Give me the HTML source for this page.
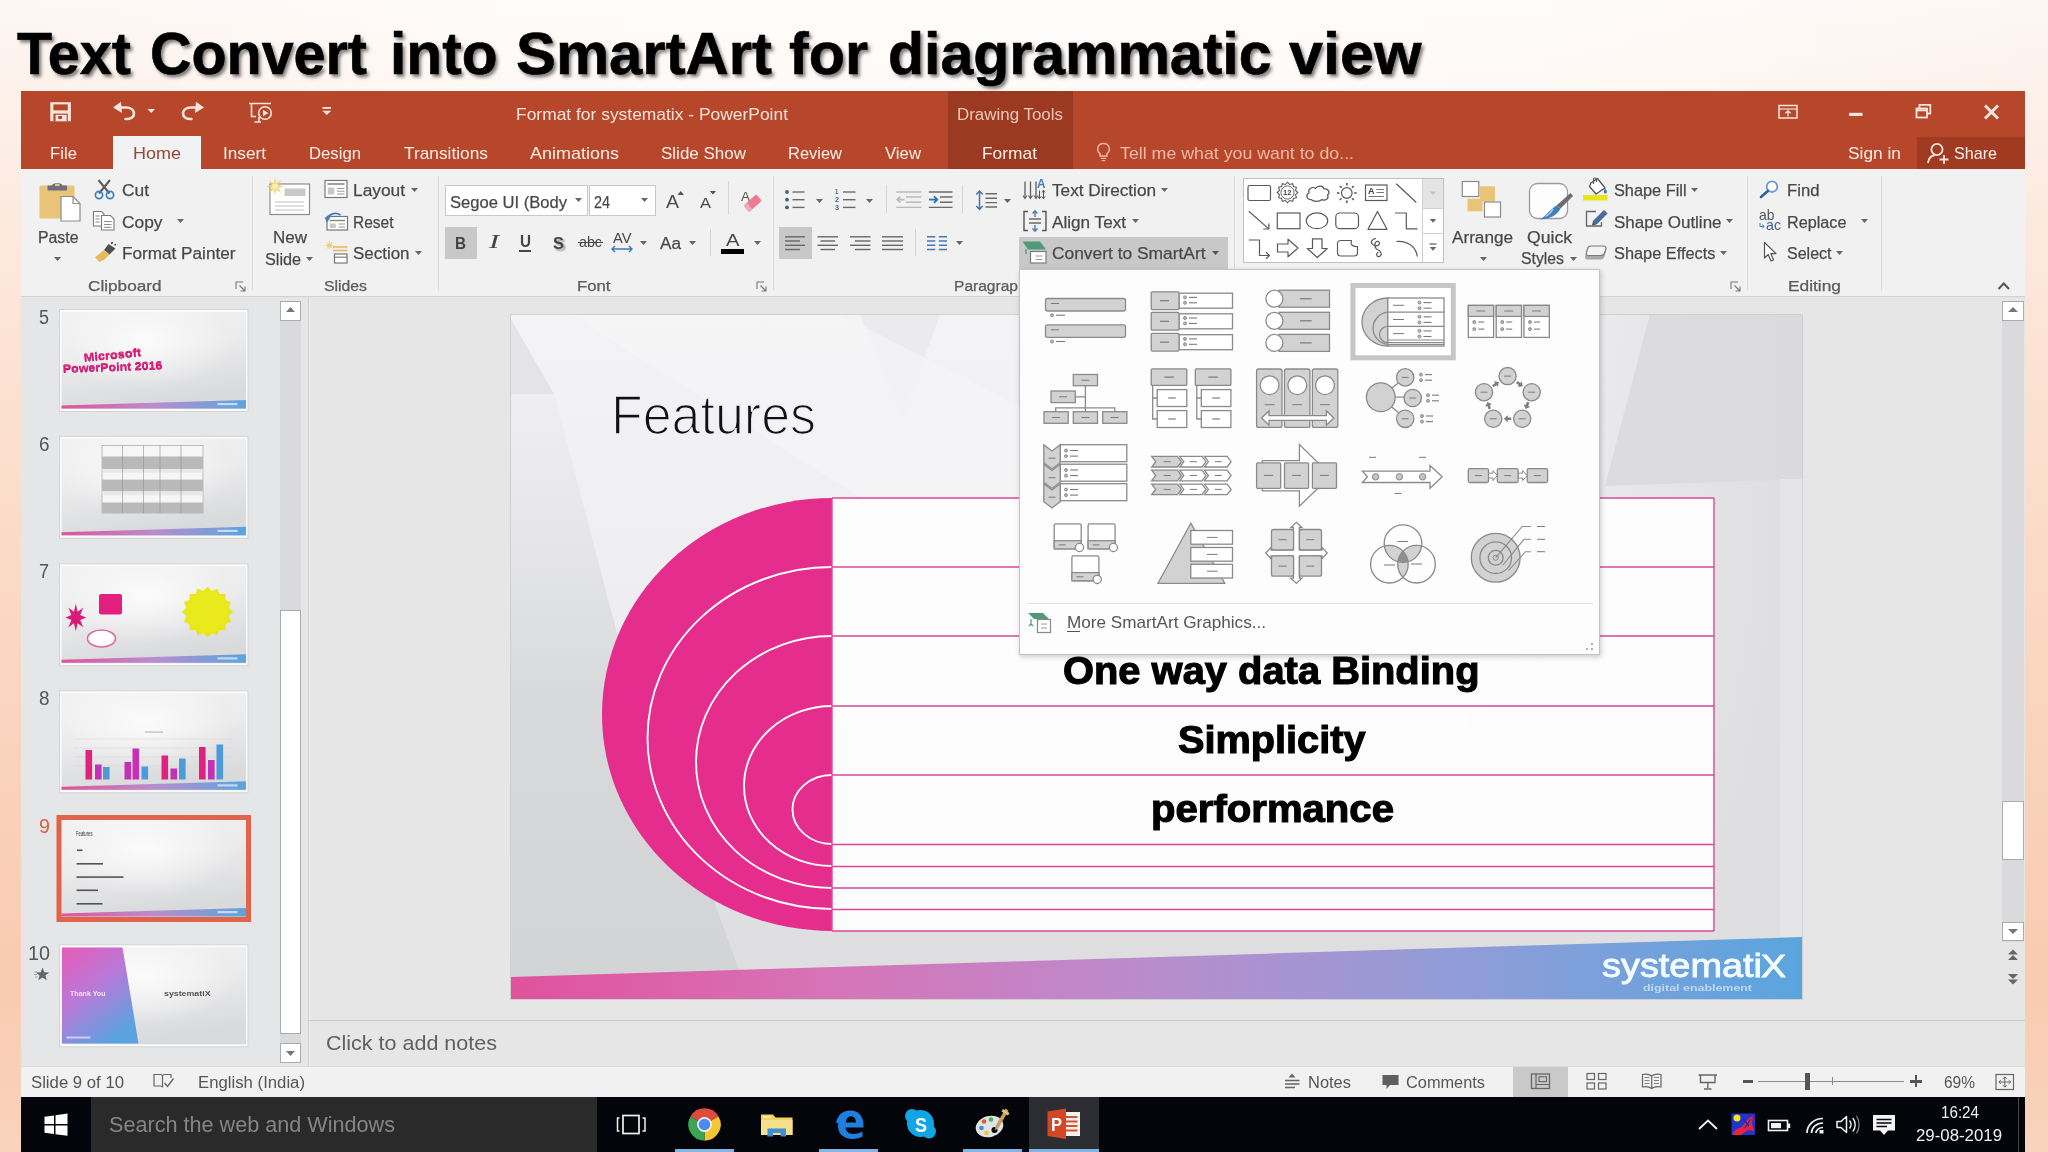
<!DOCTYPE html>
<html><head><meta charset="utf-8"><title>Text Convert into SmartArt</title>
<style>
html,body{margin:0;padding:0;}
body{width:2048px;height:1152px;overflow:hidden;position:relative;font-family:"Liberation Sans",sans-serif;background:#fbe6d9;}
#root{position:absolute;left:0;top:0;width:2048px;height:1152px;overflow:hidden;filter:blur(.5px);}
#root div,#root svg,#root span.t{position:absolute;display:block;}
span.t{white-space:nowrap;transform-origin:0 0;}
svg{overflow:visible;}
</style></head><body><div id="root">
<div style="left:0px;top:0px;width:2048px;height:1152px;background:linear-gradient(180deg,#fdf7f4 0%,#fdf0e9 9%,#fce3d4 30%,#fad7c2 55%,#f9cbb0 85%,#f9d3bc 100%);"></div>
<div style="left:0px;top:0px;width:2048px;height:91px;background:linear-gradient(90deg,rgba(255,255,255,0) 0%,rgba(255,255,255,.55) 25%,rgba(255,255,255,.7) 50%,rgba(255,255,255,.55) 75%,rgba(255,255,255,0) 100%);"></div>
<span class="t" style="left:16.5px;top:25px;font-size:59px;line-height:59px;color:#000;transform:scaleX(0.9749);font-weight:bold;text-shadow:2.5px 2.5px 3.5px rgba(0,0,0,.5);-webkit-text-stroke:.6px #000;">Text</span>
<span class="t" style="left:150px;top:25px;font-size:59px;line-height:59px;color:#000;transform:scaleX(0.9734);font-weight:bold;text-shadow:2.5px 2.5px 3.5px rgba(0,0,0,.5);-webkit-text-stroke:.6px #000;">Convert</span>
<span class="t" style="left:389.5px;top:25px;font-size:59px;line-height:59px;color:#000;transform:scaleX(0.9942);font-weight:bold;text-shadow:2.5px 2.5px 3.5px rgba(0,0,0,.5);-webkit-text-stroke:.6px #000;">into</span>
<span class="t" style="left:515.5px;top:25px;font-size:59px;line-height:59px;color:#000;transform:scaleX(1.0140);font-weight:bold;text-shadow:2.5px 2.5px 3.5px rgba(0,0,0,.5);-webkit-text-stroke:.6px #000;">SmartArt</span>
<span class="t" style="left:789px;top:25px;font-size:59px;line-height:59px;color:#000;transform:scaleX(1.0045);font-weight:bold;text-shadow:2.5px 2.5px 3.5px rgba(0,0,0,.5);-webkit-text-stroke:.6px #000;">for</span>
<span class="t" style="left:888px;top:25px;font-size:59px;line-height:59px;color:#000;transform:scaleX(0.9996);font-weight:bold;text-shadow:2.5px 2.5px 3.5px rgba(0,0,0,.5);-webkit-text-stroke:.6px #000;">diagrammatic</span>
<span class="t" style="left:1289px;top:25px;font-size:59px;line-height:59px;color:#000;transform:scaleX(1.0359);font-weight:bold;text-shadow:2.5px 2.5px 3.5px rgba(0,0,0,.5);-webkit-text-stroke:.6px #000;">view</span>
<div style="left:21px;top:91px;width:2004px;height:78px;background:#b7472a;"></div>
<div style="left:948px;top:91px;width:125px;height:78px;background:#9c3a21;"></div>
<div style="left:1917px;top:136.5px;width:108px;height:32.5px;background:#a03b22;"></div>
<div style="left:113px;top:136px;width:88px;height:34px;background:#f1f2f4;"></div>
<span class="t" style="left:516px;top:106px;font-size:17px;line-height:17px;color:#f6e3dc;transform:scaleX(1.0246);">Format for systematix - PowerPoint</span>
<span class="t" style="left:957px;top:107px;font-size:16px;line-height:16px;color:#eec7bb;transform:scaleX(1.0579);">Drawing Tools</span>
<span class="t" style="left:50px;top:145px;font-size:17px;line-height:17px;color:#fbeee9;transform:scaleX(0.9856);">File</span>
<span class="t" style="left:223px;top:145px;font-size:17px;line-height:17px;color:#fbeee9;transform:scaleX(1.0114);">Insert</span>
<span class="t" style="left:309px;top:145px;font-size:17px;line-height:17px;color:#fbeee9;transform:scaleX(0.9826);">Design</span>
<span class="t" style="left:404px;top:145px;font-size:17px;line-height:17px;color:#fbeee9;transform:scaleX(1.0180);">Transitions</span>
<span class="t" style="left:530px;top:145px;font-size:17px;line-height:17px;color:#fbeee9;transform:scaleX(1.0583);">Animations</span>
<span class="t" style="left:661px;top:145px;font-size:17px;line-height:17px;color:#fbeee9;transform:scaleX(0.9994);">Slide Show</span>
<span class="t" style="left:788px;top:145px;font-size:17px;line-height:17px;color:#fbeee9;transform:scaleX(0.9688);">Review</span>
<span class="t" style="left:885px;top:145px;font-size:17px;line-height:17px;color:#fbeee9;transform:scaleX(0.9852);">View</span>
<span class="t" style="left:982px;top:145px;font-size:17px;line-height:17px;color:#fbeee9;transform:scaleX(1.0215);">Format</span>
<span class="t" style="left:133px;top:145px;font-size:17px;line-height:17px;color:#9c4631;transform:scaleX(1.0585);">Home</span>
<span class="t" style="left:1120px;top:145px;font-size:17px;line-height:17px;color:#f0b9a6;transform:scaleX(1.0449);">Tell me what you want to do...</span>
<span class="t" style="left:1848px;top:145px;font-size:17px;line-height:17px;color:#fbeee9;transform:scaleX(1.0196);">Sign in</span>
<span class="t" style="left:1954px;top:145px;font-size:17px;line-height:17px;color:#fbeee9;transform:scaleX(0.9478);">Share</span>
<div style="left:21px;top:169px;width:2004px;height:127px;background:#f1f1f1;"></div>
<div style="left:21px;top:296px;width:2004px;height:1px;background:#d2d2d2;"></div>
<div style="left:252px;top:176px;width:1px;height:114px;background:#d8d8d8;"></div>
<div style="left:438px;top:176px;width:1px;height:114px;background:#d8d8d8;"></div>
<div style="left:773px;top:176px;width:1px;height:114px;background:#d8d8d8;"></div>
<div style="left:1234px;top:176px;width:1px;height:114px;background:#d8d8d8;"></div>
<div style="left:1747px;top:176px;width:1px;height:114px;background:#d8d8d8;"></div>
<div style="left:1881px;top:176px;width:1px;height:114px;background:#d8d8d8;"></div>
<span class="t" style="left:37.5px;top:230px;font-size:16px;line-height:16px;color:#464646;transform:scaleX(0.9899);-webkit-text-stroke:.25px #555;">Paste</span>
<svg style="left:53.5px;top:257.0px;" width="7" height="4" viewBox="0 0 7 4"><path d="M0 0H7L3.5 4Z" fill="#666"/></svg>
<span class="t" style="left:121.5px;top:183px;font-size:16px;line-height:16px;color:#464646;transform:scaleX(1.0844);-webkit-text-stroke:.25px #555;">Cut</span>
<span class="t" style="left:121.5px;top:215px;font-size:16px;line-height:16px;color:#464646;transform:scaleX(1.0843);-webkit-text-stroke:.25px #555;">Copy</span>
<svg style="left:176.5px;top:219.0px;" width="7" height="4" viewBox="0 0 7 4"><path d="M0 0H7L3.5 4Z" fill="#666"/></svg>
<span class="t" style="left:121.5px;top:246px;font-size:16px;line-height:16px;color:#464646;transform:scaleX(1.0726);-webkit-text-stroke:.25px #555;">Format Painter</span>
<span class="t" style="left:88px;top:278px;font-size:15px;line-height:15px;color:#5e5e5e;transform:scaleX(1.1447);-webkit-text-stroke:.25px #555;">Clipboard</span>
<span class="t" style="left:272.5px;top:230px;font-size:16px;line-height:16px;color:#464646;transform:scaleX(1.0622);-webkit-text-stroke:.25px #555;">New</span>
<span class="t" style="left:265px;top:252px;font-size:16px;line-height:16px;color:#464646;transform:scaleX(1.0118);-webkit-text-stroke:.25px #555;">Slide</span>
<svg style="left:305.5px;top:257.0px;" width="7" height="4" viewBox="0 0 7 4"><path d="M0 0H7L3.5 4Z" fill="#666"/></svg>
<span class="t" style="left:353px;top:183px;font-size:16px;line-height:16px;color:#464646;transform:scaleX(1.0824);-webkit-text-stroke:.25px #555;">Layout</span>
<svg style="left:410.5px;top:188.0px;" width="7" height="4" viewBox="0 0 7 4"><path d="M0 0H7L3.5 4Z" fill="#666"/></svg>
<span class="t" style="left:353px;top:215px;font-size:16px;line-height:16px;color:#464646;transform:scaleX(0.9690);-webkit-text-stroke:.25px #555;">Reset</span>
<span class="t" style="left:353px;top:246px;font-size:16px;line-height:16px;color:#464646;transform:scaleX(1.0587);-webkit-text-stroke:.25px #555;">Section</span>
<svg style="left:414.5px;top:251.0px;" width="7" height="4" viewBox="0 0 7 4"><path d="M0 0H7L3.5 4Z" fill="#666"/></svg>
<span class="t" style="left:323.5px;top:278px;font-size:15px;line-height:15px;color:#5e5e5e;transform:scaleX(1.0525);-webkit-text-stroke:.25px #555;">Slides</span>
<div style="left:445px;top:185px;width:143px;height:31px;background:#fff;border:1px solid #c8c8c8;box-sizing:border-box;"></div>
<div style="left:589px;top:185px;width:67px;height:31px;background:#fff;border:1px solid #c8c8c8;box-sizing:border-box;"></div>
<span class="t" style="left:450px;top:195px;font-size:16px;line-height:16px;color:#464646;transform:scaleX(1.0358);-webkit-text-stroke:.25px #555;">Segoe UI (Body</span>
<svg style="left:574.5px;top:198.0px;" width="7" height="4" viewBox="0 0 7 4"><path d="M0 0H7L3.5 4Z" fill="#666"/></svg>
<span class="t" style="left:594px;top:195px;font-size:16px;line-height:16px;color:#464646;transform:scaleX(0.8990);-webkit-text-stroke:.25px #555;">24</span>
<svg style="left:641.0px;top:198.0px;" width="7" height="4" viewBox="0 0 7 4"><path d="M0 0H7L3.5 4Z" fill="#666"/></svg>
<div style="left:728px;top:181px;width:1px;height:33px;background:#d5d5d5;"></div>
<div style="left:445px;top:227px;width:32px;height:32px;background:#c8c8c8;"></div>
<span class="t" style="left:455px;top:235px;font-size:17px;line-height:17px;color:#444;transform:scaleX(0.8960);font-weight:bold;">B</span>
<span class="t" style="left:489px;top:233px;font-size:18px;line-height:18px;color:#444;transform:scaleX(1.6998);font-style:italic;font-family:'Liberation Serif',serif;">I</span>
<span class="t" style="left:519.5px;top:234px;font-size:16px;line-height:16px;color:#444;transform:scaleX(0.9520);font-weight:bold;">U</span>
<div style="left:519px;top:250px;width:12px;height:1.5px;background:#444;"></div>
<span class="t" style="left:552.5px;top:235px;font-size:17px;line-height:17px;color:#444;transform:scaleX(0.9701);font-weight:bold;text-shadow:2px 2px 2px rgba(0,0,0,.35);">S</span>
<span class="t" style="left:579px;top:234px;font-size:15px;line-height:15px;color:#444;transform:scaleX(0.9510);">abc</span>
<div style="left:578px;top:242px;width:25px;height:1.3px;background:#444;"></div>
<span class="t" style="left:612.5px;top:230px;font-size:15px;line-height:15px;color:#444;transform:scaleX(0.9790);">AV</span>
<svg style="left:611px;top:245px;" width="22" height="8" viewBox="0 0 22 8"><path d="M1 4H21M4 1L1 4L4 7M18 1L21 4L18 7" stroke="#3b78b8" stroke-width="1.4" fill="none"/></svg>
<svg style="left:640.0px;top:241.0px;" width="7" height="4" viewBox="0 0 7 4"><path d="M0 0H7L3.5 4Z" fill="#666"/></svg>
<span class="t" style="left:660px;top:236px;font-size:16px;line-height:16px;color:#464646;transform:scaleX(1.0730);-webkit-text-stroke:.25px #555;">Aa</span>
<svg style="left:688.5px;top:241.0px;" width="7" height="4" viewBox="0 0 7 4"><path d="M0 0H7L3.5 4Z" fill="#666"/></svg>
<div style="left:710px;top:229px;width:1px;height:27px;background:#d5d5d5;"></div>
<span class="t" style="left:726px;top:232px;font-size:17px;line-height:17px;color:#444;transform:scaleX(1.1905);">A</span>
<div style="left:721px;top:248.5px;width:23px;height:5.5px;background:#000;"></div>
<svg style="left:753.5px;top:241.0px;" width="7" height="4" viewBox="0 0 7 4"><path d="M0 0H7L3.5 4Z" fill="#666"/></svg>
<span class="t" style="left:576.5px;top:278px;font-size:15px;line-height:15px;color:#5e5e5e;transform:scaleX(1.1161);-webkit-text-stroke:.25px #555;">Font</span>
<div style="left:886px;top:185px;width:1px;height:28px;background:#d5d5d5;"></div>
<div style="left:962px;top:185px;width:1px;height:28px;background:#d5d5d5;"></div>
<div style="left:915px;top:229px;width:1px;height:27px;background:#d5d5d5;"></div>
<div style="left:779px;top:227px;width:33px;height:32px;background:#c8c8c8;"></div>
<svg style="left:816.0px;top:198.5px;" width="7" height="4" viewBox="0 0 7 4"><path d="M0 0H7L3.5 4Z" fill="#666"/></svg>
<svg style="left:866.0px;top:198.5px;" width="7" height="4" viewBox="0 0 7 4"><path d="M0 0H7L3.5 4Z" fill="#666"/></svg>
<svg style="left:1004.0px;top:198.5px;" width="7" height="4" viewBox="0 0 7 4"><path d="M0 0H7L3.5 4Z" fill="#666"/></svg>
<svg style="left:955.8px;top:241.0px;" width="7" height="4" viewBox="0 0 7 4"><path d="M0 0H7L3.5 4Z" fill="#666"/></svg>
<span class="t" style="left:953.5px;top:278px;font-size:15px;line-height:15px;color:#5e5e5e;transform:scaleX(1.0371);-webkit-text-stroke:.25px #555;">Paragrap</span>
<span class="t" style="left:1052px;top:183px;font-size:16px;line-height:16px;color:#464646;transform:scaleX(1.0730);-webkit-text-stroke:.25px #555;">Text Direction</span>
<svg style="left:1161.0px;top:188.0px;" width="7" height="4" viewBox="0 0 7 4"><path d="M0 0H7L3.5 4Z" fill="#666"/></svg>
<span class="t" style="left:1052px;top:215px;font-size:16px;line-height:16px;color:#464646;transform:scaleX(1.0712);-webkit-text-stroke:.25px #555;">Align Text</span>
<svg style="left:1132.0px;top:219.0px;" width="7" height="4" viewBox="0 0 7 4"><path d="M0 0H7L3.5 4Z" fill="#666"/></svg>
<div style="left:1019px;top:237px;width:209px;height:32px;background:#c8c8c8;"></div>
<span class="t" style="left:1052px;top:246px;font-size:16px;line-height:16px;color:#464646;transform:scaleX(1.0857);-webkit-text-stroke:.25px #555;">Convert to SmartArt</span>
<svg style="left:1211.5px;top:251.0px;" width="7" height="4" viewBox="0 0 7 4"><path d="M0 0H7L3.5 4Z" fill="#555"/></svg>
<div style="left:1243px;top:178px;width:201px;height:85px;background:#fff;border:1px solid #c0c0c0;box-sizing:border-box;"></div>
<div style="left:1423px;top:179px;width:20px;height:29px;background:#e4e4e4;"></div>
<div style="left:1422px;top:179px;width:1px;height:83px;background:#d0d0d0;"></div>
<div style="left:1423px;top:208px;width:20px;height:1px;background:#d0d0d0;"></div>
<div style="left:1423px;top:233px;width:20px;height:1px;background:#d0d0d0;"></div>
<span class="t" style="left:1452px;top:230px;font-size:16px;line-height:16px;color:#464646;transform:scaleX(1.0716);-webkit-text-stroke:.25px #555;">Arrange</span>
<svg style="left:1479.5px;top:257.0px;" width="7" height="4" viewBox="0 0 7 4"><path d="M0 0H7L3.5 4Z" fill="#666"/></svg>
<span class="t" style="left:1527px;top:230px;font-size:16px;line-height:16px;color:#464646;transform:scaleX(1.1003);-webkit-text-stroke:.25px #555;">Quick</span>
<span class="t" style="left:1520.5px;top:251px;font-size:16px;line-height:16px;color:#464646;transform:scaleX(0.9869);-webkit-text-stroke:.25px #555;">Styles</span>
<svg style="left:1569.5px;top:257.0px;" width="7" height="4" viewBox="0 0 7 4"><path d="M0 0H7L3.5 4Z" fill="#666"/></svg>
<span class="t" style="left:1613.5px;top:183px;font-size:16px;line-height:16px;color:#464646;transform:scaleX(1.0190);-webkit-text-stroke:.25px #555;">Shape Fill</span>
<svg style="left:1690.5px;top:188.0px;" width="7" height="4" viewBox="0 0 7 4"><path d="M0 0H7L3.5 4Z" fill="#666"/></svg>
<span class="t" style="left:1613.5px;top:215px;font-size:16px;line-height:16px;color:#464646;transform:scaleX(1.0601);-webkit-text-stroke:.25px #555;">Shape Outline</span>
<svg style="left:1726.0px;top:219.0px;" width="7" height="4" viewBox="0 0 7 4"><path d="M0 0H7L3.5 4Z" fill="#666"/></svg>
<span class="t" style="left:1613.5px;top:246px;font-size:16px;line-height:16px;color:#464646;transform:scaleX(1.0218);-webkit-text-stroke:.25px #555;">Shape Effects</span>
<svg style="left:1720.0px;top:251.0px;" width="7" height="4" viewBox="0 0 7 4"><path d="M0 0H7L3.5 4Z" fill="#666"/></svg>
<span class="t" style="left:1786.5px;top:183px;font-size:16px;line-height:16px;color:#464646;transform:scaleX(1.0441);-webkit-text-stroke:.25px #555;">Find</span>
<span class="t" style="left:1786.5px;top:215px;font-size:16px;line-height:16px;color:#464646;transform:scaleX(1.0135);-webkit-text-stroke:.25px #555;">Replace</span>
<svg style="left:1861.0px;top:219.0px;" width="7" height="4" viewBox="0 0 7 4"><path d="M0 0H7L3.5 4Z" fill="#666"/></svg>
<span class="t" style="left:1786.5px;top:246px;font-size:16px;line-height:16px;color:#464646;transform:scaleX(1.0007);-webkit-text-stroke:.25px #555;">Select</span>
<svg style="left:1836.0px;top:251.0px;" width="7" height="4" viewBox="0 0 7 4"><path d="M0 0H7L3.5 4Z" fill="#666"/></svg>
<span class="t" style="left:1788px;top:278px;font-size:15px;line-height:15px;color:#5e5e5e;transform:scaleX(1.1555);-webkit-text-stroke:.25px #555;">Editing</span>
<div style="left:21px;top:297px;width:2004px;height:769px;background:#e6e6e6;"></div>
<div style="left:21px;top:297px;width:287px;height:769px;background:#e5e6e7;"></div>
<div style="left:307.5px;top:297px;width:1px;height:769px;background:#cfcfcf;"></div>
<div style="left:308.5px;top:297px;width:1px;height:769px;background:#f0f0f0;"></div>
<div style="left:280px;top:301px;width:21px;height:761px;background:#dadadc;"></div>
<div style="left:280px;top:301px;width:21px;height:20px;background:#fff;border:1px solid #ababab;box-sizing:border-box;"></div>
<svg style="left:286px;top:307px;" width="9" height="5" viewBox="0 0 9 5"><path d="M0 5H9L4.5 0Z" fill="#777"/></svg>
<div style="left:280px;top:1043px;width:21px;height:20px;background:#fff;border:1px solid #ababab;box-sizing:border-box;"></div>
<svg style="left:286px;top:1051px;" width="9" height="5" viewBox="0 0 9 5"><path d="M0 0H9L4.5 5Z" fill="#777"/></svg>
<div style="left:280px;top:610px;width:21px;height:424px;background:#fff;border:1px solid #ababab;box-sizing:border-box;"></div>
<div style="left:2002px;top:301px;width:22px;height:641px;background:#dadadc;"></div>
<div style="left:2002px;top:301px;width:22px;height:20px;background:#fff;border:1px solid #ababab;box-sizing:border-box;"></div>
<svg style="left:2008px;top:307px;" width="10" height="5" viewBox="0 0 10 5"><path d="M0 5H10L5 0Z" fill="#777"/></svg>
<div style="left:2002px;top:922px;width:22px;height:19px;background:#fff;border:1px solid #ababab;box-sizing:border-box;"></div>
<svg style="left:2008px;top:929px;" width="10" height="5" viewBox="0 0 10 5"><path d="M0 0H10L5 5Z" fill="#777"/></svg>
<div style="left:2002px;top:801px;width:22px;height:59px;background:#fff;border:1px solid #ababab;box-sizing:border-box;"></div>
<svg style="left:2007px;top:949px;" width="12" height="12" viewBox="0 0 12 12"><path d="M1 5.5H11L6 0.5ZM1 11H11L6 6Z" fill="#666"/></svg>
<svg style="left:2007px;top:973px;" width="12" height="12" viewBox="0 0 12 12"><path d="M1 1H11L6 6ZM1 6.5H11L6 11.5Z" fill="#666"/></svg>
<div style="left:309px;top:1020px;width:1716px;height:1px;background:#c9c9c9;"></div>
<span class="t" style="left:325.5px;top:1032px;font-size:21px;line-height:21px;color:#606060;transform:scaleX(1.0244);">Click to add notes</span>
<div style="left:21px;top:1066px;width:2004px;height:31px;background:#f1f1f1;"></div>
<div style="left:21px;top:1066px;width:2004px;height:1px;background:#dcdcdc;"></div>
<span class="t" style="left:31px;top:1075px;font-size:16px;line-height:16px;color:#555;transform:scaleX(1.0455);">Slide 9 of 10</span>
<span class="t" style="left:198px;top:1075px;font-size:16px;line-height:16px;color:#555;transform:scaleX(1.0462);">English (India)</span>
<span class="t" style="left:1308px;top:1075px;font-size:16px;line-height:16px;color:#555;transform:scaleX(1.0288);">Notes</span>
<span class="t" style="left:1406px;top:1075px;font-size:16px;line-height:16px;color:#555;transform:scaleX(1.0213);">Comments</span>
<div style="left:1513px;top:1067px;width:55px;height:30px;background:#c9c9c9;"></div>
<span class="t" style="left:1944px;top:1075px;font-size:16px;line-height:16px;color:#555;transform:scaleX(0.9680);">69%</span>
<div style="left:1758px;top:1081px;width:146px;height:1px;background:#8a8a8a;"></div>
<div style="left:1805px;top:1073px;width:5px;height:17px;background:#555;"></div>
<div style="left:1832px;top:1077px;width:1px;height:8px;background:#8a8a8a;"></div>
<div style="left:1743px;top:1080px;width:10px;height:2.5px;background:#555;"></div>
<div style="left:1910px;top:1080px;width:12px;height:2.5px;background:#555;"></div>
<div style="left:1914.8px;top:1075px;width:2.5px;height:12px;background:#555;"></div>
<div style="left:21px;top:1097px;width:2004px;height:55px;background:#04050a;"></div>
<div style="left:91px;top:1097px;width:506px;height:55px;background:#2a2a2b;"></div>
<span class="t" style="left:109px;top:1114px;font-size:22px;line-height:22px;color:#858585;transform:scaleX(0.9826);">Search the web and Windows</span>
<div style="left:1029px;top:1097px;width:70px;height:55px;background:#2b2d31;"></div>
<div style="left:675px;top:1149px;width:59px;height:3px;background:#82b4e6;"></div>
<div style="left:819px;top:1149px;width:59px;height:3px;background:#82b4e6;"></div>
<div style="left:963px;top:1149px;width:59px;height:3px;background:#82b4e6;"></div>
<div style="left:1029px;top:1149px;width:70px;height:3px;background:#82b4e6;"></div>
<span class="t" style="left:1941px;top:1104px;font-size:17px;line-height:17px;color:#f0f0f0;transform:scaleX(0.8932);">16:24</span>
<span class="t" style="left:1916px;top:1127px;font-size:17px;line-height:17px;color:#f0f0f0;transform:scaleX(0.9889);">29-08-2019</span>
<div style="left:2018px;top:1097px;width:1px;height:55px;background:#444;"></div>
<svg style="left:510px;top:313.5px;" width="1293" height="686" viewBox="0 0 1293 686">
<defs>
<linearGradient id="sbg" x1="0" y1="0" x2="0" y2="1"><stop offset="0" stop-color="#f3f3f5"/><stop offset="0.45" stop-color="#eeeef0"/><stop offset="0.8" stop-color="#e2e2e5"/><stop offset="1" stop-color="#dcdcdf"/></linearGradient><linearGradient id="ll" x1="0" y1="0" x2="0" y2="1"><stop offset="0" stop-color="#e6e6e8" stop-opacity=".3"/><stop offset="0.5" stop-color="#d8d9db"/><stop offset="1" stop-color="#d2d3d5"/></linearGradient>
<linearGradient id="band" x1="0" y1="0" x2="1" y2="0"><stop offset="0" stop-color="#e0529c"/><stop offset="0.25" stop-color="#d674b8"/><stop offset="0.5" stop-color="#b98dcd"/><stop offset="0.75" stop-color="#8d9dd8"/><stop offset="1" stop-color="#5aa5de"/></linearGradient>
<linearGradient id="ray" x1="0" y1="0" x2="0" y2="1"><stop offset="0" stop-color="#fff" stop-opacity=".95"/><stop offset="1" stop-color="#fff" stop-opacity="0.3"/></linearGradient>
<linearGradient id="rt" x1="0" y1="0" x2="1" y2="0"><stop offset="0" stop-color="#e2e2e5" stop-opacity="0"/><stop offset="1" stop-color="#dedee1" stop-opacity="1"/></linearGradient>
</defs>
<rect x="0" y="0" width="1293" height="686" fill="url(#sbg)"/>
<polygon points="0,0 1,5 44,80 0,80" fill="#e4e4e6"/>
<polygon points="0,80 44,80 110,330 240,686 0,686" fill="url(#ll)"/>
<polygon points="350,0 430,0 392,107" fill="#e9e9eb" opacity=".8"/>
<polygon points="60,0 330,0 700,190 400,215" fill="#f5f5f7" opacity=".7"/>
<polygon points="900,0 1293,0 1293,686 1000,686" fill="url(#rt)"/>
<polygon points="1140,0 1293,0 1293,165 1095,172" fill="#d9d9dc" opacity=".85"/>
<polygon points="1270,165 1293,165 1293,686 1270,686" fill="#e9e9eb" opacity=".6"/>
<polygon points="1,663 1293,623 1293,686 1,686" fill="url(#band)"/>
<rect x="0.5" y="0.5" width="1292" height="685" fill="none" stroke="#cfcfd1"/>
</svg>
<span class="t" style="left:611px;top:388px;font-size:55px;line-height:55px;color:#111;transform:scaleX(0.9445);-webkit-text-stroke:1.7px #f1f1f3;">Features</span>
<svg style="left:0px;top:0px;" width="2048" height="1152" viewBox="0 0 2048 1152"><path d="M832 498A230 216.5 0 0 0 832 931Z" fill="#e52d8d"/><path d="M832 567A184.5 171.0 0 0 0 832 909" fill="none" stroke="#fff" stroke-width="1.9"/><path d="M832 636A136 126.0 0 0 0 832 888" fill="none" stroke="#fff" stroke-width="1.9"/><path d="M832 706A88 80.0 0 0 0 832 866" fill="none" stroke="#fff" stroke-width="1.9"/><path d="M832 775A39.5 34.5 0 0 0 832 844" fill="none" stroke="#fff" stroke-width="1.9"/><rect x="832" y="498" width="882" height="433" fill="#fdfdfd" fill-opacity=".96"/><path d="M832 498H1714" stroke="#d74a96" stroke-width="1.4"/><path d="M832 567H1714" stroke="#d74a96" stroke-width="1.4"/><path d="M832 636H1714" stroke="#d74a96" stroke-width="1.4"/><path d="M832 706H1714" stroke="#d74a96" stroke-width="1.4"/><path d="M832 775H1714" stroke="#d74a96" stroke-width="1.4"/><path d="M832 844.5H1714" stroke="#d74a96" stroke-width="1.4"/><path d="M832 866.5H1714" stroke="#d74a96" stroke-width="1.4"/><path d="M832 888H1714" stroke="#d74a96" stroke-width="1.4"/><path d="M832 909.5H1714" stroke="#d74a96" stroke-width="1.4"/><path d="M832 931H1714" stroke="#d74a96" stroke-width="1.4"/><path d="M832 498V931M1714 498V931" stroke="#d74a96" stroke-width="1.4"/></svg>
<span class="t" style="left:1063px;top:652px;font-size:38px;line-height:38px;color:#000;transform:scaleX(1.0493);font-weight:bold;-webkit-text-stroke:1.1px #000;">One way data Binding</span>
<span class="t" style="left:1178px;top:721px;font-size:38px;line-height:38px;color:#000;transform:scaleX(1.0446);font-weight:bold;-webkit-text-stroke:1.1px #000;">Simplicity</span>
<span class="t" style="left:1151px;top:790px;font-size:38px;line-height:38px;color:#000;transform:scaleX(1.0556);font-weight:bold;-webkit-text-stroke:1.1px #000;">performance</span>
<span class="t" style="left:1602px;top:948px;font-size:34px;line-height:34px;color:#f4fbff;transform:scaleX(1.1143);-webkit-text-stroke:.9px #f4fbff;">systemati</span>
<span class="t" style="left:1761px;top:950px;font-size:32px;line-height:32px;color:#f4fbff;transform:scaleX(1.1712);-webkit-text-stroke:.9px #f4fbff;">X</span>
<span class="t" style="left:1643px;top:984px;font-size:9px;line-height:9px;color:#bcdaf3;transform:scaleX(1.3795);font-weight:bold;">digital enablement</span>
<div style="left:1019px;top:269px;width:581px;height:386px;background:#fdfdfd;border:1px solid #c4c4c4;box-sizing:border-box;box-shadow:1px 2px 5px rgba(0,0,0,.2);"></div>
<div style="left:1027px;top:603px;width:566px;height:1px;background:#e3e3e3;"></div>
<svg style="left:0px;top:0px;" width="2048" height="1152" viewBox="0 0 2048 1152"><rect x="1045.5" y="298.5" width="80.0" height="12.5" rx="2" fill="#d2d2d2" stroke="#8a8a8a" stroke-width="1.3"/><path d="M1051.0 303.5H1059.0" stroke="#7a7a7a" stroke-width="1"/><circle cx="1052.0" cy="315.2" r="1.5" fill="#bbb" stroke="#7a7a7a" stroke-width="0.8"/><path d="M1056.0 315.2H1065.0" stroke="#7a7a7a" stroke-width="1.1"/><rect x="1045.5" y="324.8" width="80.0" height="12.5" rx="2" fill="#d2d2d2" stroke="#8a8a8a" stroke-width="1.3"/><path d="M1051.0 329.8H1059.0" stroke="#7a7a7a" stroke-width="1"/><circle cx="1052.0" cy="341.5" r="1.5" fill="#bbb" stroke="#7a7a7a" stroke-width="0.8"/><path d="M1056.0 341.5H1065.0" stroke="#7a7a7a" stroke-width="1.1"/><rect x="1179.0" y="293.2" width="53.5" height="15.0" rx="0" fill="#fff" stroke="#8a8a8a" stroke-width="1.3"/><rect x="1151.2" y="291.8" width="27.8" height="17.8" rx="1" fill="#d2d2d2" stroke="#8a8a8a" stroke-width="1.3"/><path d="M1160.0 300.7H1169.0" stroke="#7a7a7a" stroke-width="1.2"/><circle cx="1185.0" cy="297.4" r="1.5" fill="#bbb" stroke="#7a7a7a" stroke-width="0.8"/><path d="M1189.0 297.4H1197.0" stroke="#7a7a7a" stroke-width="1.1"/><circle cx="1185.0" cy="302.8" r="1.5" fill="#bbb" stroke="#7a7a7a" stroke-width="0.8"/><path d="M1189.0 302.8H1197.0" stroke="#7a7a7a" stroke-width="1.1"/><rect x="1179.0" y="313.8" width="53.5" height="15.0" rx="0" fill="#fff" stroke="#8a8a8a" stroke-width="1.3"/><rect x="1151.2" y="312.4" width="27.8" height="17.8" rx="1" fill="#d2d2d2" stroke="#8a8a8a" stroke-width="1.3"/><path d="M1160.0 321.3H1169.0" stroke="#7a7a7a" stroke-width="1.2"/><circle cx="1185.0" cy="318.0" r="1.5" fill="#bbb" stroke="#7a7a7a" stroke-width="0.8"/><path d="M1189.0 318.0H1197.0" stroke="#7a7a7a" stroke-width="1.1"/><circle cx="1185.0" cy="323.4" r="1.5" fill="#bbb" stroke="#7a7a7a" stroke-width="0.8"/><path d="M1189.0 323.4H1197.0" stroke="#7a7a7a" stroke-width="1.1"/><rect x="1179.0" y="334.7" width="53.5" height="15.0" rx="0" fill="#fff" stroke="#8a8a8a" stroke-width="1.3"/><rect x="1151.2" y="333.3" width="27.8" height="17.8" rx="1" fill="#d2d2d2" stroke="#8a8a8a" stroke-width="1.3"/><path d="M1160.0 342.2H1169.0" stroke="#7a7a7a" stroke-width="1.2"/><circle cx="1185.0" cy="338.9" r="1.5" fill="#bbb" stroke="#7a7a7a" stroke-width="0.8"/><path d="M1189.0 338.9H1197.0" stroke="#7a7a7a" stroke-width="1.1"/><circle cx="1185.0" cy="344.3" r="1.5" fill="#bbb" stroke="#7a7a7a" stroke-width="0.8"/><path d="M1189.0 344.3H1197.0" stroke="#7a7a7a" stroke-width="1.1"/><rect x="1279.0" y="290.2" width="50.5" height="17.0" rx="0" fill="#d2d2d2" stroke="#8a8a8a" stroke-width="1.3"/><circle cx="1274.4" cy="298.7" r="8.5" fill="#fff" stroke="#8a8a8a" stroke-width="1.3"/><path d="M1300.0 298.7H1311.7" stroke="#7a7a7a" stroke-width="1.2"/><rect x="1279.0" y="312.3" width="50.5" height="17.0" rx="0" fill="#d2d2d2" stroke="#8a8a8a" stroke-width="1.3"/><circle cx="1274.4" cy="320.8" r="8.5" fill="#fff" stroke="#8a8a8a" stroke-width="1.3"/><path d="M1300.0 320.8H1311.7" stroke="#7a7a7a" stroke-width="1.2"/><rect x="1279.0" y="334.4" width="50.5" height="17.0" rx="0" fill="#d2d2d2" stroke="#8a8a8a" stroke-width="1.3"/><circle cx="1274.4" cy="342.9" r="8.5" fill="#fff" stroke="#8a8a8a" stroke-width="1.3"/><path d="M1300.0 342.9H1311.7" stroke="#7a7a7a" stroke-width="1.2"/><rect x="1352.9" y="285.5" width="100.4" height="72.3" fill="#fff" stroke="#c6c6c6" stroke-width="5"/><path d="M1387.8 298A25.8 24 0 0 0 1387.8 346Z" fill="#d2d2d2" stroke="#8a8a8a" stroke-width="1.3" /><path d="M1387.8 312.2A16.6 16.2 0 0 0 1387.8 344.4" fill="none" stroke="#8a8a8a" stroke-width="1.3" /><path d="M1387.8 326.3A8.3 8.2 0 0 0 1387.8 342.7" fill="none" stroke="#8a8a8a" stroke-width="1.3" /><rect x="1387.8" y="298.0" width="56.2" height="48.0" rx="0" fill="#fff" stroke="#8a8a8a" stroke-width="1.3"/><path d="M1387.8 312.2H1444.0" stroke="#8a8a8a" stroke-width="1.2"/><path d="M1387.8 326.3H1444.0" stroke="#8a8a8a" stroke-width="1.2"/><path d="M1387.8 340.0H1444.0" stroke="#8a8a8a" stroke-width="1.2"/><path d="M1387.8 342.5H1444.0" stroke="#8a8a8a" stroke-width="1.2"/><path d="M1387.8 344.3H1444.0" stroke="#8a8a8a" stroke-width="1.2"/><path d="M1393.0 305.3H1404.0" stroke="#7a7a7a" stroke-width="1"/><circle cx="1419.5" cy="302.6" r="1.5" fill="#bbb" stroke="#7a7a7a" stroke-width="0.8"/><path d="M1423.5 302.6H1431.5" stroke="#7a7a7a" stroke-width="1.1"/><circle cx="1419.5" cy="308.2" r="1.5" fill="#bbb" stroke="#7a7a7a" stroke-width="0.8"/><path d="M1423.5 308.2H1431.5" stroke="#7a7a7a" stroke-width="1.1"/><path d="M1393.0 319.5H1404.0" stroke="#7a7a7a" stroke-width="1"/><circle cx="1419.5" cy="316.8" r="1.5" fill="#bbb" stroke="#7a7a7a" stroke-width="0.8"/><path d="M1423.5 316.8H1431.5" stroke="#7a7a7a" stroke-width="1.1"/><circle cx="1419.5" cy="322.4" r="1.5" fill="#bbb" stroke="#7a7a7a" stroke-width="0.8"/><path d="M1423.5 322.4H1431.5" stroke="#7a7a7a" stroke-width="1.1"/><path d="M1393.0 333.6H1404.0" stroke="#7a7a7a" stroke-width="1"/><circle cx="1419.5" cy="330.9" r="1.5" fill="#bbb" stroke="#7a7a7a" stroke-width="0.8"/><path d="M1423.5 330.9H1431.5" stroke="#7a7a7a" stroke-width="1.1"/><circle cx="1419.5" cy="336.5" r="1.5" fill="#bbb" stroke="#7a7a7a" stroke-width="0.8"/><path d="M1423.5 336.5H1431.5" stroke="#7a7a7a" stroke-width="1.1"/><rect x="1468.3" y="305.4" width="25.3" height="32.0" rx="0" fill="#fff" stroke="#8a8a8a" stroke-width="1.3"/><rect x="1468.3" y="305.4" width="25.3" height="11.0" rx="0" fill="#d2d2d2" stroke="#8a8a8a" stroke-width="1.3"/><path d="M1476.3 311.0H1485.3" stroke="#7a7a7a" stroke-width="1"/><circle cx="1474.3" cy="322.0" r="1.5" fill="#bbb" stroke="#7a7a7a" stroke-width="0.8"/><path d="M1478.3 322.0H1484.3" stroke="#7a7a7a" stroke-width="1.1"/><circle cx="1474.3" cy="329.1" r="1.5" fill="#bbb" stroke="#7a7a7a" stroke-width="0.8"/><path d="M1478.3 329.1H1484.3" stroke="#7a7a7a" stroke-width="1.1"/><rect x="1496.2" y="305.4" width="25.3" height="32.0" rx="0" fill="#fff" stroke="#8a8a8a" stroke-width="1.3"/><rect x="1496.2" y="305.4" width="25.3" height="11.0" rx="0" fill="#d2d2d2" stroke="#8a8a8a" stroke-width="1.3"/><path d="M1504.2 311.0H1513.2" stroke="#7a7a7a" stroke-width="1"/><circle cx="1502.2" cy="322.0" r="1.5" fill="#bbb" stroke="#7a7a7a" stroke-width="0.8"/><path d="M1506.2 322.0H1512.2" stroke="#7a7a7a" stroke-width="1.1"/><circle cx="1502.2" cy="329.1" r="1.5" fill="#bbb" stroke="#7a7a7a" stroke-width="0.8"/><path d="M1506.2 329.1H1512.2" stroke="#7a7a7a" stroke-width="1.1"/><rect x="1524.0" y="305.4" width="25.3" height="32.0" rx="0" fill="#fff" stroke="#8a8a8a" stroke-width="1.3"/><rect x="1524.0" y="305.4" width="25.3" height="11.0" rx="0" fill="#d2d2d2" stroke="#8a8a8a" stroke-width="1.3"/><path d="M1532.0 311.0H1541.0" stroke="#7a7a7a" stroke-width="1"/><circle cx="1530.0" cy="322.0" r="1.5" fill="#bbb" stroke="#7a7a7a" stroke-width="0.8"/><path d="M1534.0 322.0H1540.0" stroke="#7a7a7a" stroke-width="1.1"/><circle cx="1530.0" cy="329.1" r="1.5" fill="#bbb" stroke="#7a7a7a" stroke-width="0.8"/><path d="M1534.0 329.1H1540.0" stroke="#7a7a7a" stroke-width="1.1"/><path d="M1085.4 385.7V411.7M1075.3 396.8H1085.4M1055.7 411.7V407.8H1114.8V411.7" fill="none" stroke="#8a8a8a" stroke-width="1.3" /><rect x="1073.3" y="374.5" width="24.2" height="11.2" rx="0" fill="#d2d2d2" stroke="#8a8a8a" stroke-width="1.3"/><path d="M1081.5 380.2H1089.5" stroke="#7a7a7a" stroke-width="1"/><rect x="1051.0" y="391.0" width="24.3" height="11.6" rx="0" fill="#d2d2d2" stroke="#8a8a8a" stroke-width="1.3"/><path d="M1059.0 396.8H1067.0" stroke="#7a7a7a" stroke-width="1"/><rect x="1044.0" y="411.7" width="24.2" height="11.6" rx="0" fill="#d2d2d2" stroke="#8a8a8a" stroke-width="1.3"/><path d="M1052.0 417.5H1060.0" stroke="#7a7a7a" stroke-width="1"/><rect x="1073.3" y="411.7" width="24.2" height="11.6" rx="0" fill="#d2d2d2" stroke="#8a8a8a" stroke-width="1.3"/><path d="M1081.3 417.5H1089.3" stroke="#7a7a7a" stroke-width="1"/><rect x="1102.7" y="411.7" width="24.2" height="11.6" rx="0" fill="#d2d2d2" stroke="#8a8a8a" stroke-width="1.3"/><path d="M1110.7 417.5H1118.7" stroke="#7a7a7a" stroke-width="1"/><path d="M1152.7 385.4V419H1157.2M1152.7 398H1157.2" fill="none" stroke="#8a8a8a" stroke-width="1.3" /><rect x="1151.2" y="368.8" width="35.6" height="16.6" rx="1" fill="#d2d2d2" stroke="#8a8a8a" stroke-width="1.3"/><path d="M1164.2 377.1H1173.7" stroke="#7a7a7a" stroke-width="1.2"/><rect x="1157.2" y="389.6" width="29.6" height="16.9" rx="0" fill="#fff" stroke="#8a8a8a" stroke-width="1.3"/><path d="M1168.2 398.0H1175.7" stroke="#7a7a7a" stroke-width="1.2"/><rect x="1157.2" y="410.6" width="29.6" height="16.9" rx="0" fill="#fff" stroke="#8a8a8a" stroke-width="1.3"/><path d="M1168.2 419.0H1175.7" stroke="#7a7a7a" stroke-width="1.2"/><path d="M1196.8 385.4V419H1201.3M1196.8 398H1201.3" fill="none" stroke="#8a8a8a" stroke-width="1.3" /><rect x="1195.3" y="368.8" width="35.6" height="16.6" rx="1" fill="#d2d2d2" stroke="#8a8a8a" stroke-width="1.3"/><path d="M1208.3 377.1H1217.8" stroke="#7a7a7a" stroke-width="1.2"/><rect x="1201.3" y="389.6" width="29.6" height="16.9" rx="0" fill="#fff" stroke="#8a8a8a" stroke-width="1.3"/><path d="M1212.3 398.0H1219.8" stroke="#7a7a7a" stroke-width="1.2"/><rect x="1201.3" y="410.6" width="29.6" height="16.9" rx="0" fill="#fff" stroke="#8a8a8a" stroke-width="1.3"/><path d="M1212.3 419.0H1219.8" stroke="#7a7a7a" stroke-width="1.2"/><rect x="1256.6" y="369.0" width="25.4" height="58.4" rx="2" fill="#d2d2d2" stroke="#8a8a8a" stroke-width="1.3"/><circle cx="1269.6" cy="385.2" r="9.4" fill="#fff" stroke="#8a8a8a" stroke-width="1.3"/><path d="M1264.6 404.7H1274.6" stroke="#7a7a7a" stroke-width="1"/><rect x="1284.5" y="369.0" width="25.4" height="58.4" rx="2" fill="#d2d2d2" stroke="#8a8a8a" stroke-width="1.3"/><circle cx="1297.3" cy="385.2" r="9.4" fill="#fff" stroke="#8a8a8a" stroke-width="1.3"/><path d="M1292.3 404.7H1302.3" stroke="#7a7a7a" stroke-width="1"/><rect x="1312.4" y="369.0" width="25.4" height="58.4" rx="2" fill="#d2d2d2" stroke="#8a8a8a" stroke-width="1.3"/><circle cx="1325.0" cy="385.2" r="9.4" fill="#fff" stroke="#8a8a8a" stroke-width="1.3"/><path d="M1320.0 404.7H1330.0" stroke="#7a7a7a" stroke-width="1"/><path d="M1261.6 418L1269 410.8V415.6H1326.4V410.8L1333.8 418L1326.4 425.2V420.4H1269V425.2Z" fill="#fff" stroke="#8a8a8a" stroke-width="1.3" /><path d="M1380.8 397.2L1405.2 377.3M1380.8 397.2H1412.7M1380.8 397.2L1405.2 418.8" fill="none" stroke="#8a8a8a" stroke-width="1.3" /><circle cx="1380.8" cy="397.2" r="14.4" fill="#d2d2d2" stroke="#8a8a8a" stroke-width="1.3"/><circle cx="1405.2" cy="377.4" r="8.7" fill="#d2d2d2" stroke="#8a8a8a" stroke-width="1.3"/><path d="M1401.7 377.4H1408.7" stroke="#7a7a7a" stroke-width="1"/><circle cx="1421.0" cy="374.6" r="1.5" fill="#bbb" stroke="#7a7a7a" stroke-width="0.8"/><path d="M1425.0 374.6H1432.0" stroke="#7a7a7a" stroke-width="1.1"/><circle cx="1421.0" cy="380.2" r="1.5" fill="#bbb" stroke="#7a7a7a" stroke-width="0.8"/><path d="M1425.0 380.2H1432.0" stroke="#7a7a7a" stroke-width="1.1"/><circle cx="1412.7" cy="398.0" r="8.7" fill="#d2d2d2" stroke="#8a8a8a" stroke-width="1.3"/><path d="M1409.2 398.0H1416.2" stroke="#7a7a7a" stroke-width="1"/><circle cx="1428.0" cy="395.2" r="1.5" fill="#bbb" stroke="#7a7a7a" stroke-width="0.8"/><path d="M1432.0 395.2H1439.0" stroke="#7a7a7a" stroke-width="1.1"/><circle cx="1428.0" cy="400.8" r="1.5" fill="#bbb" stroke="#7a7a7a" stroke-width="0.8"/><path d="M1432.0 400.8H1439.0" stroke="#7a7a7a" stroke-width="1.1"/><circle cx="1405.2" cy="418.8" r="8.7" fill="#d2d2d2" stroke="#8a8a8a" stroke-width="1.3"/><path d="M1401.7 418.8H1408.7" stroke="#7a7a7a" stroke-width="1"/><circle cx="1422.0" cy="416.0" r="1.5" fill="#bbb" stroke="#7a7a7a" stroke-width="0.8"/><path d="M1426.0 416.0H1433.0" stroke="#7a7a7a" stroke-width="1.1"/><circle cx="1422.0" cy="421.6" r="1.5" fill="#bbb" stroke="#7a7a7a" stroke-width="0.8"/><path d="M1426.0 421.6H1433.0" stroke="#7a7a7a" stroke-width="1.1"/><polygon points="1517.5,381.1 1520.4,383.1 1521.6,381.2 1522.8,386.3 1517.7,387.1 1518.9,385.2 1516.0,383.3" fill="#7d7d7d"/><polygon points="1529.4,402.6 1528.2,405.9 1530.3,406.7 1525.7,409.1 1523.6,404.3 1525.7,405.1 1526.9,401.8" fill="#7d7d7d"/><polygon points="1511.2,420.1 1507.7,420.1 1507.7,422.4 1503.9,418.8 1507.7,415.2 1507.7,417.5 1511.2,417.5" fill="#7d7d7d"/><polygon points="1488.5,409.2 1487.4,405.9 1485.2,406.7 1487.4,401.9 1492.0,404.3 1489.8,405.1 1491.0,408.4" fill="#7d7d7d"/><polygon points="1492.2,385.0 1495.1,383.1 1493.8,381.2 1498.9,382.0 1497.8,387.1 1496.5,385.2 1493.6,387.2" fill="#7d7d7d"/><circle cx="1507.6" cy="376.1" r="8.6" fill="#d2d2d2" stroke="#8a8a8a" stroke-width="1.3"/><path d="M1504.1 376.1H1511.1" stroke="#7a7a7a" stroke-width="1"/><circle cx="1531.7" cy="392.2" r="8.6" fill="#d2d2d2" stroke="#8a8a8a" stroke-width="1.3"/><path d="M1528.2 392.2H1535.2" stroke="#7a7a7a" stroke-width="1"/><circle cx="1522.2" cy="418.8" r="8.6" fill="#d2d2d2" stroke="#8a8a8a" stroke-width="1.3"/><path d="M1518.7 418.8H1525.7" stroke="#7a7a7a" stroke-width="1"/><circle cx="1493.2" cy="418.8" r="8.6" fill="#d2d2d2" stroke="#8a8a8a" stroke-width="1.3"/><path d="M1489.7 418.8H1496.7" stroke="#7a7a7a" stroke-width="1"/><circle cx="1484.0" cy="392.2" r="8.6" fill="#d2d2d2" stroke="#8a8a8a" stroke-width="1.3"/><path d="M1480.5 392.2H1487.5" stroke="#7a7a7a" stroke-width="1"/><rect x="1060.2" y="444.7" width="66.6" height="17.0" rx="0" fill="#fff" stroke="#8a8a8a" stroke-width="1.3"/><circle cx="1066.0" cy="450.5" r="1.5" fill="#bbb" stroke="#7a7a7a" stroke-width="0.8"/><path d="M1070.0 450.5H1078.0" stroke="#7a7a7a" stroke-width="1.1"/><circle cx="1066.0" cy="456.1" r="1.5" fill="#bbb" stroke="#7a7a7a" stroke-width="0.8"/><path d="M1070.0 456.1H1078.0" stroke="#7a7a7a" stroke-width="1.1"/><rect x="1060.2" y="464.2" width="66.6" height="17.0" rx="0" fill="#fff" stroke="#8a8a8a" stroke-width="1.3"/><circle cx="1066.0" cy="470.0" r="1.5" fill="#bbb" stroke="#7a7a7a" stroke-width="0.8"/><path d="M1070.0 470.0H1078.0" stroke="#7a7a7a" stroke-width="1.1"/><circle cx="1066.0" cy="475.6" r="1.5" fill="#bbb" stroke="#7a7a7a" stroke-width="0.8"/><path d="M1070.0 475.6H1078.0" stroke="#7a7a7a" stroke-width="1.1"/><rect x="1060.2" y="483.7" width="66.6" height="17.0" rx="0" fill="#fff" stroke="#8a8a8a" stroke-width="1.3"/><circle cx="1066.0" cy="489.5" r="1.5" fill="#bbb" stroke="#7a7a7a" stroke-width="0.8"/><path d="M1070.0 489.5H1078.0" stroke="#7a7a7a" stroke-width="1.1"/><circle cx="1066.0" cy="495.1" r="1.5" fill="#bbb" stroke="#7a7a7a" stroke-width="0.8"/><path d="M1070.0 495.1H1078.0" stroke="#7a7a7a" stroke-width="1.1"/><path d="M1043.8 483.7L1052 489.9L1060.2 483.7V501.7L1052 508.0L1043.8 501.7Z" fill="#d2d2d2" stroke="#8a8a8a" stroke-width="1.3" /><path d="M1048.5 497.2H1055.5" stroke="#7a7a7a" stroke-width="1"/><path d="M1043.8 464.2L1052 470.4L1060.2 464.2V482.2L1052 488.5L1043.8 482.2Z" fill="#d2d2d2" stroke="#8a8a8a" stroke-width="1.3" /><path d="M1048.5 477.7H1055.5" stroke="#7a7a7a" stroke-width="1"/><path d="M1043.8 444.7L1052 450.9L1060.2 444.7V462.7L1052 469.0L1043.8 462.7Z" fill="#d2d2d2" stroke="#8a8a8a" stroke-width="1.3" /><path d="M1048.5 458.2H1055.5" stroke="#7a7a7a" stroke-width="1"/><path d="M1204.4 456.4H1227.1L1231.1 461.7L1227.1 467.0H1204.4L1208.4 461.7Z" fill="#fff" stroke="#8a8a8a" stroke-width="1.3" /><path d="M1214.8 461.7H1221.8" stroke="#7a7a7a" stroke-width="1"/><path d="M1179.8 456.4H1202L1206 461.7L1202 467.0H1179.8L1183.8 461.7Z" fill="#fff" stroke="#8a8a8a" stroke-width="1.3" /><path d="M1189.9 461.7H1196.9" stroke="#7a7a7a" stroke-width="1"/><path d="M1151.7 456.4H1177.5L1181.5 461.7L1177.5 467.0H1151.7L1155.7 461.7Z" fill="#d2d2d2" stroke="#8a8a8a" stroke-width="1.3" /><path d="M1163.6 461.7H1170.6" stroke="#7a7a7a" stroke-width="1"/><path d="M1204.4 470.2H1227.1L1231.1 475.5L1227.1 480.8H1204.4L1208.4 475.5Z" fill="#fff" stroke="#8a8a8a" stroke-width="1.3" /><path d="M1214.8 475.5H1221.8" stroke="#7a7a7a" stroke-width="1"/><path d="M1179.8 470.2H1202L1206 475.5L1202 480.8H1179.8L1183.8 475.5Z" fill="#fff" stroke="#8a8a8a" stroke-width="1.3" /><path d="M1189.9 475.5H1196.9" stroke="#7a7a7a" stroke-width="1"/><path d="M1151.7 470.2H1177.5L1181.5 475.5L1177.5 480.8H1151.7L1155.7 475.5Z" fill="#d2d2d2" stroke="#8a8a8a" stroke-width="1.3" /><path d="M1163.6 475.5H1170.6" stroke="#7a7a7a" stroke-width="1"/><path d="M1204.4 484.09999999999997H1227.1L1231.1 489.4L1227.1 494.7H1204.4L1208.4 489.4Z" fill="#fff" stroke="#8a8a8a" stroke-width="1.3" /><path d="M1214.8 489.4H1221.8" stroke="#7a7a7a" stroke-width="1"/><path d="M1179.8 484.09999999999997H1202L1206 489.4L1202 494.7H1179.8L1183.8 489.4Z" fill="#fff" stroke="#8a8a8a" stroke-width="1.3" /><path d="M1189.9 489.4H1196.9" stroke="#7a7a7a" stroke-width="1"/><path d="M1151.7 484.09999999999997H1177.5L1181.5 489.4L1177.5 494.7H1151.7L1155.7 489.4Z" fill="#d2d2d2" stroke="#8a8a8a" stroke-width="1.3" /><path d="M1163.6 489.4H1170.6" stroke="#7a7a7a" stroke-width="1"/><path d="M1262.4 460.6H1299.4V444.6L1331 475.4L1299.4 506.1V490.8H1262.4Z" fill="#fff" stroke="#8a8a8a" stroke-width="1.3" /><rect x="1256.6" y="462.9" width="24.1" height="25.4" rx="1" fill="#d2d2d2" stroke="#8a8a8a" stroke-width="1.3"/><path d="M1264.1 475.4H1273.1" stroke="#7a7a7a" stroke-width="1"/><rect x="1284.5" y="462.9" width="24.1" height="25.4" rx="1" fill="#d2d2d2" stroke="#8a8a8a" stroke-width="1.3"/><path d="M1292.0 475.4H1301.0" stroke="#7a7a7a" stroke-width="1"/><rect x="1312.4" y="462.9" width="24.1" height="25.4" rx="1" fill="#d2d2d2" stroke="#8a8a8a" stroke-width="1.3"/><path d="M1319.9 475.4H1328.9" stroke="#7a7a7a" stroke-width="1"/><path d="M1362.4 471.2H1430V465.6L1442.2 476.8L1430 488.2V482.5H1362.4L1367.5 476.8Z" fill="#fff" stroke="#8a8a8a" stroke-width="1.3" /><circle cx="1375.6" cy="476.8" r="3.2" fill="#c4c4c4" stroke="#8a8a8a" stroke-width="1"/><circle cx="1399.4" cy="476.8" r="3.2" fill="#c4c4c4" stroke="#8a8a8a" stroke-width="1"/><circle cx="1422.6" cy="476.8" r="3.2" fill="#c4c4c4" stroke="#8a8a8a" stroke-width="1"/><path d="M1369.0 457.3H1376.0" stroke="#7a7a7a" stroke-width="1"/><path d="M1419.0 457.3H1426.0" stroke="#7a7a7a" stroke-width="1"/><path d="M1394.5 493.4H1401.5" stroke="#7a7a7a" stroke-width="1"/><path d="M1488.5 473.2H1493.0V470.6L1497.3 475.6L1493.0 480.6V478H1488.5Z" fill="#fff" stroke="#8a8a8a" stroke-width="1" /><path d="M1518.1 473.2H1522.6V470.6L1527.2 475.6L1522.6 480.6V478H1518.1Z" fill="#fff" stroke="#8a8a8a" stroke-width="1" /><rect x="1468.3" y="468.7" width="20.2" height="13.8" rx="1.5" fill="#d2d2d2" stroke="#8a8a8a" stroke-width="1.3"/><path d="M1474.9 475.6H1481.9" stroke="#7a7a7a" stroke-width="1"/><rect x="1497.3" y="468.7" width="20.8" height="13.8" rx="1.5" fill="#d2d2d2" stroke="#8a8a8a" stroke-width="1.3"/><path d="M1504.2 475.6H1511.2" stroke="#7a7a7a" stroke-width="1"/><rect x="1527.2" y="468.7" width="20.4" height="13.8" rx="1.5" fill="#d2d2d2" stroke="#8a8a8a" stroke-width="1.3"/><path d="M1533.9 475.6H1540.9" stroke="#7a7a7a" stroke-width="1"/><rect x="1054.2" y="523.9" width="27.0" height="25.0" rx="1.5" fill="#fff" stroke="#8a8a8a" stroke-width="1.3"/><rect x="1054.2" y="540.7" width="27.0" height="8.2" rx="0" fill="#d2d2d2" stroke="#8a8a8a" stroke-width="1.3"/><path d="M1058.7 544.9H1065.7" stroke="#7a7a7a" stroke-width="1"/><circle cx="1079.5" cy="547.5" r="4.1" fill="#fff" stroke="#8a8a8a" stroke-width="1.3"/><rect x="1088.1" y="523.9" width="27.0" height="25.0" rx="1.5" fill="#fff" stroke="#8a8a8a" stroke-width="1.3"/><rect x="1088.1" y="540.7" width="27.0" height="8.2" rx="0" fill="#d2d2d2" stroke="#8a8a8a" stroke-width="1.3"/><path d="M1092.6 544.9H1099.6" stroke="#7a7a7a" stroke-width="1"/><circle cx="1113.4" cy="547.5" r="4.1" fill="#fff" stroke="#8a8a8a" stroke-width="1.3"/><rect x="1071.9" y="555.8" width="27.0" height="25.0" rx="1.5" fill="#fff" stroke="#8a8a8a" stroke-width="1.3"/><rect x="1071.9" y="572.6" width="27.0" height="8.2" rx="0" fill="#d2d2d2" stroke="#8a8a8a" stroke-width="1.3"/><path d="M1076.4 576.8H1083.4" stroke="#7a7a7a" stroke-width="1"/><circle cx="1097.2" cy="579.4" r="4.1" fill="#fff" stroke="#8a8a8a" stroke-width="1.3"/><path d="M1190.8 523.2L1158 583.3H1224.8Z" fill="#d2d2d2" stroke="#8a8a8a" stroke-width="1.3" /><rect x="1190.8" y="530.5" width="41.7" height="13.7" rx="0" fill="#fff" stroke="#8a8a8a" stroke-width="1.3"/><path d="M1207.0 537.4H1217.5" stroke="#7a7a7a" stroke-width="1"/><rect x="1190.8" y="547.5" width="41.7" height="13.7" rx="0" fill="#fff" stroke="#8a8a8a" stroke-width="1.3"/><path d="M1207.0 554.4H1217.5" stroke="#7a7a7a" stroke-width="1"/><rect x="1190.8" y="564.3" width="41.7" height="13.7" rx="0" fill="#fff" stroke="#8a8a8a" stroke-width="1.3"/><path d="M1207.0 571.2H1217.5" stroke="#7a7a7a" stroke-width="1"/><path d="M1296.4 522.3L1302 527.5H1299.4V550H1322V547.4L1327.2 553L1322 558.6V556H1299.4V578.2H1302L1296.4 583.4L1290.8 578.2H1293.4V556H1271V558.6L1265.7 553L1271 547.4V550H1293.4V527.5H1290.8Z" fill="#fff" stroke="#8a8a8a" stroke-width="1.3" /><rect x="1271.5" y="529.5" width="22.1" height="20.3" rx="2" fill="#d2d2d2" stroke="#8a8a8a" stroke-width="1.3"/><path d="M1278.5 539.7H1286.5" stroke="#7a7a7a" stroke-width="1"/><rect x="1271.5" y="555.9" width="22.1" height="20.3" rx="2" fill="#d2d2d2" stroke="#8a8a8a" stroke-width="1.3"/><path d="M1278.5 566.1H1286.5" stroke="#7a7a7a" stroke-width="1"/><rect x="1299.4" y="529.5" width="22.1" height="20.3" rx="2" fill="#d2d2d2" stroke="#8a8a8a" stroke-width="1.3"/><path d="M1306.4 539.7H1314.4" stroke="#7a7a7a" stroke-width="1"/><rect x="1299.4" y="555.9" width="22.1" height="20.3" rx="2" fill="#d2d2d2" stroke="#8a8a8a" stroke-width="1.3"/><path d="M1306.4 566.1H1314.4" stroke="#7a7a7a" stroke-width="1"/><defs><clipPath id="vc1"><circle cx="1403" cy="543.6" r="18.8"/></clipPath><clipPath id="vc2"><circle cx="1389.4" cy="564.2" r="18.8"/></clipPath></defs><circle cx="1389.4" cy="564.2" r="18.8" fill="#d2d2d2" clip-path="url(#vc1)"/><circle cx="1416.5" cy="564.2" r="18.8" fill="#d2d2d2" clip-path="url(#vc1)"/><circle cx="1416.5" cy="564.2" r="18.8" fill="#d2d2d2" clip-path="url(#vc2)"/><g clip-path="url(#vc1)"><circle cx="1416.5" cy="564.2" r="18.8" fill="#8f8f8f" clip-path="url(#vc2)"/></g><circle cx="1403.0" cy="543.6" r="18.8" fill="none" stroke="#8a8a8a" stroke-width="1.3"/><circle cx="1389.4" cy="564.2" r="18.8" fill="none" stroke="#8a8a8a" stroke-width="1.3"/><circle cx="1416.5" cy="564.2" r="18.8" fill="none" stroke="#8a8a8a" stroke-width="1.3"/><path d="M1397.5 541.5H1408.0" stroke="#7a7a7a" stroke-width="1"/><path d="M1384.0 565.0H1395.0" stroke="#7a7a7a" stroke-width="1"/><path d="M1411.0 564.0H1422.0" stroke="#7a7a7a" stroke-width="1"/><circle cx="1495.7" cy="557.7" r="24.4" fill="#d2d2d2" stroke="#8a8a8a" stroke-width="1.3"/><circle cx="1495.7" cy="557.7" r="15.8" fill="#d2d2d2" stroke="#8a8a8a" stroke-width="1.3"/><circle cx="1495.7" cy="557.7" r="7.4" fill="#d2d2d2" stroke="#8a8a8a" stroke-width="1.3"/><circle cx="1495.7" cy="557.7" r="2.6" fill="#d2d2d2" stroke="#8a8a8a" stroke-width="1"/><path d="M1495.7 557.7L1522.2 526.5H1531M1503 565L1524 539.3H1531M1508.5 570.5L1525.5 551.7H1531" fill="none" stroke="#8a8a8a" stroke-width="1.1" /><path d="M1537.0 526.5H1545.0" stroke="#7a7a7a" stroke-width="1"/><path d="M1537.0 539.3H1545.0" stroke="#7a7a7a" stroke-width="1"/><path d="M1537.0 551.7H1545.0" stroke="#7a7a7a" stroke-width="1"/></svg>
<span class="t" style="left:1067px;top:614px;font-size:17px;line-height:17px;color:#555;transform:scaleX(1.0079);">More SmartArt Graphics...</span>
<div style="left:1067px;top:631px;width:13px;height:1px;background:#555;"></div>
<svg style="left:1026px;top:610px;" width="28" height="26" viewBox="0 0 28 26"><path d="M2 3H17L23 9H8Z" fill="#4f9a78"/><path d="M5 9V14M5 14l-2 2M5 14l2 2" stroke="#4f9a78" stroke-width="1.2" fill="none"/><rect x="11.5" y="9.5" width="13" height="13" fill="#fff" stroke="#888" stroke-width="1.2"/><path d="M15 14H21M15 18H21" stroke="#999" stroke-width="1"/></svg>
<svg style="left:1584px;top:642px;" width="10" height="10" viewBox="0 0 10 10"><circle cx="8" cy="2" r="1" fill="#999"/><circle cx="8" cy="7" r="1" fill="#999"/><circle cx="3" cy="7" r="1" fill="#999"/></svg>
<svg style="left:0px;top:0px;" width="2048" height="1152" viewBox="0 0 2048 1152"><defs>
<linearGradient id="tbg" x1="0" y1="0" x2="0.3" y2="1"><stop offset="0" stop-color="#f1f1f2"/><stop offset="0.5" stop-color="#ebebec"/><stop offset="1" stop-color="#d9dadc"/></linearGradient>
<linearGradient id="tband" x1="0" y1="0" x2="1" y2="0"><stop offset="0" stop-color="#e0529c"/><stop offset="0.5" stop-color="#b98dcd"/><stop offset="1" stop-color="#5aa5de"/></linearGradient>
<linearGradient id="t10" x1="0" y1="0" x2="0.6" y2="1"><stop offset="0" stop-color="#e85ab8"/><stop offset="0.5" stop-color="#b77ad8"/><stop offset="1" stop-color="#5aa3e0"/></linearGradient>
<radialGradient id="tlight" cx="0.45" cy="0.3" r="0.5"><stop offset="0" stop-color="#fff" stop-opacity=".8"/><stop offset="1" stop-color="#fff" stop-opacity="0"/></radialGradient>
</defs><rect x="59.5" y="309.5" width="188.5" height="102" fill="#fbfbfb" stroke="#d2d3d5" stroke-width="1"/><rect x="61.5" y="312.0" width="184.5" height="97" fill="url(#tbg)"/><rect x="61.5" y="312.0" width="184.5" height="97" fill="url(#tlight)"/><polygon points="61.5,405.5 246.0,400.0 246.0,408.5 61.5,408.5" fill="url(#tband)"/><rect x="217.5" y="403.0" width="20" height="2.2" fill="#cfe6f8" opacity=".85"/><rect x="59.5" y="436.3" width="188.5" height="102" fill="#fbfbfb" stroke="#d2d3d5" stroke-width="1"/><rect x="61.5" y="438.8" width="184.5" height="97" fill="url(#tbg)"/><rect x="61.5" y="438.8" width="184.5" height="97" fill="url(#tlight)"/><polygon points="61.5,532.3 246.0,526.8 246.0,535.3 61.5,535.3" fill="url(#tband)"/><rect x="217.5" y="529.8" width="20" height="2.2" fill="#cfe6f8" opacity=".85"/><rect x="59.5" y="563.8" width="188.5" height="102" fill="#fbfbfb" stroke="#d2d3d5" stroke-width="1"/><rect x="61.5" y="566.3" width="184.5" height="97" fill="url(#tbg)"/><rect x="61.5" y="566.3" width="184.5" height="97" fill="url(#tlight)"/><polygon points="61.5,659.8 246.0,654.3 246.0,662.8 61.5,662.8" fill="url(#tband)"/><rect x="217.5" y="657.3" width="20" height="2.2" fill="#cfe6f8" opacity=".85"/><rect x="59.5" y="690.8" width="188.5" height="102" fill="#fbfbfb" stroke="#d2d3d5" stroke-width="1"/><rect x="61.5" y="693.3" width="184.5" height="97" fill="url(#tbg)"/><rect x="61.5" y="693.3" width="184.5" height="97" fill="url(#tlight)"/><polygon points="61.5,786.8 246.0,781.3 246.0,789.8 61.5,789.8" fill="url(#tband)"/><rect x="217.5" y="784.3" width="20" height="2.2" fill="#cfe6f8" opacity=".85"/><rect x="56.5" y="815" width="194.5" height="107" fill="#e0634a"/><rect x="61.5" y="820.0" width="184.5" height="97" fill="url(#tbg)"/><rect x="61.5" y="820.0" width="184.5" height="97" fill="url(#tlight)"/><polygon points="61.5,913.5 246.0,908.0 246.0,916.5 61.5,916.5" fill="url(#tband)"/><rect x="217.5" y="911.0" width="20" height="2.2" fill="#cfe6f8" opacity=".85"/><rect x="59.5" y="944.8" width="188.5" height="102" fill="#fbfbfb" stroke="#d2d3d5" stroke-width="1"/><rect x="61.5" y="947.3" width="184.5" height="97" fill="url(#tbg)"/><rect x="61.5" y="947.3" width="184.5" height="97" fill="url(#tlight)"/><rect x="102" y="445.5" width="101" height="67.5" fill="#f6f6f6" stroke="#999" stroke-width=".6"/><rect x="102" y="456.5" width="101" height="12.5" fill="#b9b9b9"/><rect x="102" y="479.6" width="101" height="11.6" fill="#b9b9b9"/><rect x="102" y="502.5" width="101" height="10.5" fill="#b9b9b9"/><rect x="102" y="468.9" width="101" height="4" fill="#e3e3e3" opacity=".7"/><rect x="102" y="491.2" width="101" height="4" fill="#e3e3e3" opacity=".7"/><path d="M122.5 445.5V513" stroke="#8e8e8e" stroke-width=".6"/><path d="M143.5 445.5V513" stroke="#8e8e8e" stroke-width=".6"/><path d="M160 445.5V513" stroke="#8e8e8e" stroke-width=".6"/><path d="M181 445.5V513" stroke="#8e8e8e" stroke-width=".6"/><rect x="99" y="594" width="23" height="20.5" rx="2" fill="#e3207f"/><g transform="translate(75.8 617.5) scale(.8 1.05)"><polygon points="0.0,-13.0 2.3,-5.5 9.2,-9.2 5.5,-2.3 13.0,-0.0 5.5,2.3 9.2,9.2 2.3,5.5 0.0,13.0 -2.3,5.5 -9.2,9.2 -5.5,2.3 -13.0,0.0 -5.5,-2.3 -9.2,-9.2 -2.3,-5.5" fill="#d81b78"/></g><ellipse cx="101.5" cy="638.5" rx="14" ry="8.5" fill="#fff" stroke="#df6aa0" stroke-width="1.6"/><polygon points="207.5,586.5 211.7,590.9 217.3,588.4 219.4,594.1 225.5,594.0 225.4,600.1 231.1,602.2 228.6,607.8 233.0,612.0 228.6,616.2 231.1,621.8 225.4,623.9 225.5,630.0 219.4,629.9 217.3,635.6 211.7,633.1 207.5,637.5 203.3,633.1 197.7,635.6 195.6,629.9 189.5,630.0 189.6,623.9 183.9,621.8 186.4,616.2 182.0,612.0 186.4,607.8 183.9,602.2 189.6,600.1 189.5,594.0 195.6,594.1 197.7,588.4 203.3,590.9" fill="#e6e619"/><circle cx="207.5" cy="612" r="21" fill="#e9e91c"/><path d="M74 739H232M74 748H232M74 757H232M74 766H232" stroke="#d9d9d9" stroke-width=".6"/><rect x="85.5" y="750.0" width="6.6" height="29.5" fill="#e0227f"/><rect x="95" y="764.5" width="6.6" height="15" fill="#c531b4"/><rect x="103" y="767.0" width="6.6" height="12.5" fill="#4a9bd8"/><rect x="124.5" y="762.0" width="6.6" height="17.5" fill="#c531b4"/><rect x="132.5" y="748.5" width="6.6" height="31" fill="#c531b4"/><rect x="141.5" y="766.5" width="6.6" height="13" fill="#4a9bd8"/><rect x="161.5" y="755.5" width="6.6" height="24" fill="#e0227f"/><rect x="170.5" y="768.5" width="6.6" height="11" fill="#c531b4"/><rect x="179" y="758.5" width="6.6" height="21" fill="#4a9bd8"/><rect x="199" y="747.0" width="6.6" height="32.5" fill="#e0227f"/><rect x="208" y="760.0" width="6.6" height="19.5" fill="#c531b4"/><rect x="216.5" y="744.5" width="6.6" height="35" fill="#4a9bd8"/><rect x="145" y="731.5" width="18" height="1.2" fill="#bbb"/><rect x="77" y="849.5" width="5.5" height="1.6" fill="#3a3a3a" opacity=".85"/><rect x="76.5" y="863" width="26.5" height="1.6" fill="#3a3a3a" opacity=".85"/><rect x="76.5" y="876.3" width="47" height="1.6" fill="#3a3a3a" opacity=".85"/><rect x="76.5" y="889.5" width="21.5" height="1.6" fill="#3a3a3a" opacity=".85"/><rect x="76.5" y="903" width="26" height="1.6" fill="#3a3a3a" opacity=".85"/><polygon points="62,947.5 122.5,947.5 138.5,1043.5 62,1043.5" fill="url(#t10)"/><rect x="66.5" y="1036.5" width="24" height="2" fill="#e6d9f5" opacity=".8"/></svg>
<span class="t" style="left:39px;top:307px;font-size:20px;line-height:20px;color:#555;transform:scaleX(0.8990);">5</span>
<span class="t" style="left:39px;top:434px;font-size:20px;line-height:20px;color:#555;transform:scaleX(0.9440);">6</span>
<span class="t" style="left:39px;top:561px;font-size:20px;line-height:20px;color:#555;transform:scaleX(0.8990);">7</span>
<span class="t" style="left:39px;top:688px;font-size:20px;line-height:20px;color:#555;transform:scaleX(0.9440);">8</span>
<span class="t" style="left:38.5px;top:816px;font-size:20px;line-height:20px;color:#d65f42;transform:scaleX(0.9889);">9</span>
<span class="t" style="left:28px;top:943px;font-size:20px;line-height:20px;color:#555;transform:scaleX(0.9889);">10</span>
<svg style="left:34px;top:966px;" width="16" height="16" viewBox="0 0 16 16"><polygon points="8.5,1.5 10.3,6.2 15.3,6.4 11.4,9.5 12.8,14.3 8.5,11.5 4.2,14.3 5.6,9.5 1.7,6.4 6.7,6.2" fill="#666"/><path d="M0.5 6H3M0 8.5H3M1 11H3.5" stroke="#888" stroke-width=".8"/></svg>
<span class="t" style="left:84px;top:352px;font-size:11px;line-height:11px;color:#e01f7d;transform:rotate(-5.6deg) scaleX(1.1616);transform-origin:0 8.3px;font-weight:bold;text-shadow:0 1px 0 #b3186a;">Microsoft</span>
<span class="t" style="left:62.5px;top:363px;font-size:11px;line-height:11px;color:#e01f7d;transform:rotate(-2deg) scaleX(1.1302);transform-origin:0 8.3px;font-weight:bold;text-shadow:0 1px 0 #b3186a;">PowerPoint 2016</span>
<span class="t" style="left:76px;top:831px;font-size:6.5px;line-height:6.5px;color:#333;transform:scaleX(0.6432);">Features</span>
<span class="t" style="left:70px;top:990px;font-size:7.5px;line-height:7.5px;color:#f3e3f7;transform:scaleX(0.9430);font-weight:bold;">Thank You</span>
<span class="t" style="left:163.5px;top:990px;font-size:8px;line-height:8px;color:#555;transform:scaleX(1.1007);font-weight:bold;">systematiX</span>
<svg style="left:0px;top:0px;" width="2048" height="1152" viewBox="0 0 2048 1152"><rect x="50.3" y="102.2" width="20.6" height="19" fill="#f7e6df"/><rect x="53.4" y="104.4" width="14.4" height="6" fill="#b7472a"/><rect x="53.4" y="113.6" width="14.4" height="7.6" fill="#b7472a"/><rect x="55.6" y="114.8" width="11" height="6.4" fill="#f7e6df"/><rect x="58.2" y="116" width="3.8" height="3" fill="#b7472a"/><path d="M118 107.5H126C131.500 107.5 134 110.500 134 113.500C134 117 130.500 119.500 125.500 119" fill="none" stroke="#f7e6df" stroke-width="2.600" stroke-linecap="round"/><path d="M113 107.600L121 101.800L122 113Z" fill="#f7e6df"/><path d="M147.5 109H155L151.2 113Z" fill="#f7e6df"/><path d="M199 107.5H191C185.500 107.5 183 110.500 183 113.500C183 117 186.500 119.500 191.500 119" fill="none" stroke="#f7e6df" stroke-width="2.600" stroke-linecap="round"/><path d="M204 107.600L196 101.800L195 113Z" fill="#f7e6df"/><path d="M249 103.5H271M251.5 103.5V116.5H256M259 117V121.5M254.5 122H261" fill="none" stroke="#f7e6df" stroke-width="1.6"/><circle cx="265" cy="113" r="6.3" fill="#b7472a" stroke="#f7e6df" stroke-width="1.6"/><path d="M263 109.8L268.3 113L263 116.2Z" fill="#f7e6df"/><rect x="322.5" y="107" width="8.5" height="1.8" fill="#f7e6df"/><path d="M322.3 110.8H331.3L326.8 115Z" fill="#f7e6df"/><rect x="1779" y="105.5" width="18" height="12.5" fill="none" stroke="#f7e6df" stroke-width="1.5"/><path d="M1779 109H1797" stroke="#f7e6df" stroke-width="1.2"/><path d="M1788 116.5V111M1785.3 113.3L1788 110.8L1790.7 113.3" stroke="#f7e6df" stroke-width="1.3" fill="none"/><rect x="1849" y="112.8" width="13.5" height="3.2" fill="#f7e6df"/><path d="M1919.5 108V104.8H1930.3V113.5H1927" fill="none" stroke="#f7e6df" stroke-width="1.8"/><rect x="1916.5" y="108.5" width="10.5" height="9" fill="none" stroke="#f7e6df" stroke-width="1.8"/><path d="M1916.5 110.3H1927" stroke="#f7e6df" stroke-width="2"/><path d="M1985 105.5L1998 118.5M1998 105.5L1985 118.5" stroke="#f7e6df" stroke-width="3"/><path d="M1103.5 143.5a5.6 5.6 0 0 1 3.4 10.2v2.3h-6.8v-2.3a5.6 5.6 0 0 1 3.4-10.2z" fill="none" stroke="#f0b9a6" stroke-width="1.5"/><path d="M1100.8 158.3H1106.2M1101.8 160.6H1105.2" stroke="#f0b9a6" stroke-width="1.3"/><circle cx="1937" cy="149.5" r="5.6" fill="none" stroke="#f7e6df" stroke-width="1.8"/><path d="M1928 163C1928.5 158 1931.5 155.5 1935 155" fill="none" stroke="#f7e6df" stroke-width="1.8"/><path d="M1939.5 159.5H1948.5M1944 155V164" stroke="#f7e6df" stroke-width="1.8"/><path d="M236 289V282H243" fill="none" stroke="#777" stroke-width="1.1"/><path d="M239.5 285.5L244.5 290.5M245 286.5V291H240.5" stroke="#777" stroke-width="1.1" fill="none"/><path d="M757 289V282H764" fill="none" stroke="#777" stroke-width="1.1"/><path d="M760.5 285.5L765.5 290.5M766 286.5V291H761.5" stroke="#777" stroke-width="1.1" fill="none"/><path d="M1731 289V282H1738" fill="none" stroke="#777" stroke-width="1.1"/><path d="M1734.5 285.5L1739.5 290.5M1740 286.5V291H1735.5" stroke="#777" stroke-width="1.1" fill="none"/><path d="M1998.5 289L2003.8 283.5L2009 289" fill="none" stroke="#555" stroke-width="2"/><rect x="39.5" y="185.5" width="35" height="33" rx="1.5" fill="#e9c477"/><path d="M47.5 190.5V185.5H52C52 182 62.5 182 62.5 185.5H67V190.5Z" fill="#6e6b7c"/><rect x="55" y="183.7" width="4.6" height="2.4" fill="#e9c477"/><path d="M61 196.5H73L80 203.5V221H61Z" fill="#fff" stroke="#8d8d8d" stroke-width="1.2"/><path d="M73 196.5V203.5H80" fill="none" stroke="#8d8d8d" stroke-width="1.2"/><path d="M98.5 180L109.5 193.5M110 180L99 193.5" stroke="#5c5c5c" stroke-width="2"/><circle cx="99" cy="195" r="3.6" fill="none" stroke="#3b7fc4" stroke-width="1.7"/><circle cx="110" cy="195" r="3.6" fill="none" stroke="#3b7fc4" stroke-width="1.7"/><path d="M93.5 211.5H101.5L104 214V226H93.5Z" fill="#fff" stroke="#7a7a7a" stroke-width="1.1"/><path d="M101.5 215.5H110.5L114 219V230H101.5Z" fill="#fff" stroke="#7a7a7a" stroke-width="1.1"/><path d="M95.5 216H99.5M95.5 219H99.5M95.5 222H99.5M104 221.5H111.5M104 224.5H111.5M104 227.3H111.5" stroke="#8a8a8a" stroke-width="1"/><path d="M108.5 244L115.5 248.5L109.5 254.5L104 250Z" fill="#4f4f4f"/><path d="M104 250L109.5 254.5L104.5 259.5L99.5 262L95 257.5Z" fill="#e5b95c"/><path d="M111 243.5L113 242.5M114.500 245L116 244.500" stroke="#444" stroke-width="1.5"/><rect x="270" y="184" width="39.500" height="30.500" fill="#fff" stroke="#8e8e8e" stroke-width="1.2"/><rect x="284.500" y="188.500" width="21" height="7.500" fill="#c9c9c9"/><path d="M275 202H304M275 206H304M275 210H304" stroke="#c2c2c2" stroke-width="1.1"/><polygon points="275.0,177.5 276.2,183.5 281.4,180.1 278.0,185.3 284.0,186.5 278.0,187.7 281.4,192.9 276.2,189.5 275.0,195.5 273.8,189.5 268.6,192.9 272.0,187.7 266.0,186.5 272.0,185.3 268.6,180.1 273.8,183.5" fill="#f2d168"/><circle cx="275" cy="186.5" r="3" fill="#fbeeb3"/><rect x="325" y="180.500" width="22" height="17" fill="#fff" stroke="#777" stroke-width="1.2"/><path d="M327.5 184H344.500" stroke="#888" stroke-width="1.6"/><rect x="327.800" y="187.500" width="6.500" height="7" fill="#c8c8c8"/><path d="M337 188.500H344.500M337 191.200H344.500M337 194H344.500" stroke="#999" stroke-width="1"/><rect x="327" y="216.500" width="20.500" height="13.500" fill="#fff" stroke="#777" stroke-width="1.2"/><path d="M329.500 220.500H345" stroke="#888" stroke-width="1.500"/><rect x="329.800" y="223.500" width="6" height="4.500" fill="#c8c8c8"/><path d="M338.500 224H345M338.500 227H345" stroke="#999" stroke-width="1"/><path d="M327 220C327.500 214.500 335 211.500 340.500 215" fill="none" stroke="#3b7fc4" stroke-width="1.800"/><path d="M324.500 217.500L330.500 217L327.200 222.500Z" fill="#3b7fc4"/><polygon points="329.5,240.5 330.2,243.8 333.0,242.0 331.2,244.8 334.5,245.5 331.2,246.2 333.0,249.0 330.2,247.2 329.5,250.5 328.8,247.2 326.0,249.0 327.8,246.2 324.5,245.5 327.8,244.8 326.0,242.0 328.8,243.8" fill="#f2d168"/><path d="M333 247H347.500M333 250.500H347.500" stroke="#e5b95c" stroke-width="1.600"/><rect x="334.500" y="254" width="12.500" height="9" fill="#fff" stroke="#777" stroke-width="1.200"/><path d="M334.500 257.200H347" stroke="#777" stroke-width="1.1"/></svg>
<span class="t" style="left:666px;top:193px;font-size:18px;line-height:18px;color:#4a4a4a;transform:scaleX(1.0827);">A</span>
<span class="t" style="left:699.5px;top:196px;font-size:14.5px;line-height:14.5px;color:#4a4a4a;transform:scaleX(1.1373);">A</span>
<span class="t" style="left:741px;top:190px;font-size:13px;line-height:13px;color:#555;transform:scaleX(1.0379);">A</span>
<span class="t" style="left:835.3px;top:189px;font-size:6.5px;line-height:6.5px;color:#3d5f94;transform:scaleX(0.9128);font-weight:bold;">1</span>
<span class="t" style="left:835px;top:197px;font-size:6.5px;line-height:6.5px;color:#3d5f94;transform:scaleX(1.1065);font-weight:bold;">2</span>
<span class="t" style="left:835px;top:205px;font-size:6.5px;line-height:6.5px;color:#3d5f94;transform:scaleX(1.1065);font-weight:bold;">3</span>
<span class="t" style="left:1037px;top:178px;font-size:12.5px;line-height:12.5px;color:#3b7fc4;transform:scaleX(0.9416);font-weight:bold;">A</span>
<span class="t" style="left:1283.3px;top:189px;font-size:7.5px;line-height:7.5px;color:#444;transform:scaleX(1.0069);font-weight:bold;">12</span>
<span class="t" style="left:1368px;top:187px;font-size:8.5px;line-height:8.5px;color:#444;transform:scaleX(1.0589);font-weight:bold;">A</span>
<span class="t" style="left:1758.5px;top:208px;font-size:14.5px;line-height:14.5px;color:#555;transform:scaleX(0.9610);">ab</span>
<span class="t" style="left:1766px;top:218px;font-size:14.5px;line-height:14.5px;color:#3b5f96;transform:scaleX(0.9795);">ac</span>
<svg style="left:0px;top:0px;" width="2048" height="1152" viewBox="0 0 2048 1152"><path d="M677.5 195H684L680.700 191Z" fill="#555"/><path d="M709.800 191H716L712.900 194.500Z" fill="#555"/><g transform="rotate(-42 752.500 203)"><rect x="744" y="199" width="17" height="8.500" rx="1.500" fill="#ee7b93"/><rect x="744" y="199" width="4.500" height="8.500" rx="1" fill="#f4a9b9"/></g><circle cx="787" cy="192" r="1.900" fill="#4b5d78"/><path d="M792.500 192H804.500" stroke="#6a6a6a" stroke-width="1.400"/><circle cx="787" cy="199.7" r="1.900" fill="#4b5d78"/><path d="M792.500 199.7H804.500" stroke="#6a6a6a" stroke-width="1.400"/><circle cx="787" cy="207.4" r="1.900" fill="#4b5d78"/><path d="M792.500 207.4H804.500" stroke="#6a6a6a" stroke-width="1.400"/><path d="M843 192H855.500" stroke="#6a6a6a" stroke-width="1.400"/><path d="M843 199.7H855.500" stroke="#6a6a6a" stroke-width="1.400"/><path d="M843 207.4H855.500" stroke="#6a6a6a" stroke-width="1.400"/><path d="M896.300 192H921.300M906 197H921.300M906 202.200H921.300M896.300 207.400H921.300" stroke="#b9b9b9" stroke-width="1.400"/><path d="M904.500 199.600H897.500M900.300 196.600L897.200 199.600L900.300 202.600" stroke="#b9b9b9" stroke-width="1.600" fill="none"/><path d="M928.800 192H952.500M940 197H952.500M940 202.200H952.500M928.800 207.400H952.500" stroke="#6a6a6a" stroke-width="1.400"/><path d="M929 199.600H937M934 196.300L937.300 199.600L934 202.900" stroke="#2f6db8" stroke-width="1.900" fill="none"/><path d="M979.500 191.500V209M976.300 194.500L979.500 191L982.700 194.500M976.300 206L979.500 209.500L982.700 206" stroke="#3f74b5" stroke-width="1.500" fill="none"/><path d="M985.500 193.800H997M985.500 198.200H997M985.500 202.600H997M985.500 207H997" stroke="#6a6a6a" stroke-width="1.400"/><path d="M785 236.8H805" stroke="#666" stroke-width="1.400"/><path d="M785 241H800" stroke="#666" stroke-width="1.400"/><path d="M785 245.3H805" stroke="#666" stroke-width="1.400"/><path d="M785 249.5H800" stroke="#666" stroke-width="1.400"/><path d="M817.5 236.8H838" stroke="#666" stroke-width="1.400"/><path d="M820.5 241H835" stroke="#666" stroke-width="1.400"/><path d="M817.5 245.3H838" stroke="#666" stroke-width="1.400"/><path d="M820.5 249.5H835" stroke="#666" stroke-width="1.400"/><path d="M850 236.8H870.5" stroke="#666" stroke-width="1.400"/><path d="M855 241H870.5" stroke="#666" stroke-width="1.400"/><path d="M850 245.3H870.5" stroke="#666" stroke-width="1.400"/><path d="M855 249.5H870.5" stroke="#666" stroke-width="1.400"/><path d="M882 236.8H903" stroke="#666" stroke-width="1.400"/><path d="M882 241H903" stroke="#666" stroke-width="1.400"/><path d="M882 245.3H903" stroke="#666" stroke-width="1.400"/><path d="M882 249.5H903" stroke="#666" stroke-width="1.400"/><path d="M927 236.8H935.300M938.800 236.8H947" stroke="#4a7ab5" stroke-width="1.500"/><path d="M927 241H935.300M938.800 241H947" stroke="#4a7ab5" stroke-width="1.500"/><path d="M927 245.3H935.300M938.800 245.3H947" stroke="#4a7ab5" stroke-width="1.500"/><path d="M927 249.5H935.300M938.800 249.5H947" stroke="#4a7ab5" stroke-width="1.500"/><path d="M1025 181.500V198M1030.500 181.500V198M1036 181.500V198" stroke="#5f5f5f" stroke-width="1.300"/><path d="M1023 195.500L1025 198.500L1027 195.500M1028.500 195.500L1030.500 198.500L1032.500 195.500M1034 195.500L1036 198.500L1038 195.500" stroke="#5f5f5f" stroke-width="1.100" fill="none"/><path d="M1039.500 190.500V198.500M1043.500 190.500V198.500M1038 196.500L1039.500 198.800L1041 196.500M1042 192.500L1043.500 190.200L1045 192.500M1042 196.500L1043.500 198.800L1045 196.500" stroke="#555" stroke-width="1" fill="none"/><path d="M1028 211.500H1024V230.500H1028M1042 211.500H1046V230.500H1042" stroke="#555" stroke-width="1.400" fill="none"/><path d="M1029 219H1041M1029 223H1041" stroke="#6a6a6a" stroke-width="1.300"/><path d="M1035 211V217M1032.500 213.500L1035 210.800L1037.500 213.500M1035 225V231M1032.500 228.500L1035 231.200L1037.500 228.500" stroke="#4f7cb5" stroke-width="1.400" fill="none"/><path d="M1022.500 241.500H1040L1046 249.500H1028Z" fill="#4f9a78"/><path d="M1026 249V254" stroke="#4f9a78" stroke-width="1.300"/><rect x="1030.500" y="251.500" width="15.500" height="11.500" fill="#fff" stroke="#7d7d7d" stroke-width="1.200"/><path d="M1035.500 256H1042.500M1035.500 259.500H1042.500" stroke="#999" stroke-width="1"/><rect x="1248" y="185.500" width="22.500" height="15" rx="1.500" fill="none" stroke="#5a5a5a" stroke-width="1.2"/><polygon points="1287.5,182.2 1289.6,184.5 1292.7,183.6 1293.4,186.6 1296.4,187.3 1295.5,190.4 1297.8,192.5 1295.5,194.6 1296.4,197.7 1293.4,198.4 1292.7,201.4 1289.6,200.5 1287.5,202.8 1285.4,200.5 1282.3,201.4 1281.6,198.4 1278.6,197.7 1279.5,194.6 1277.2,192.5 1279.5,190.4 1278.6,187.3 1281.6,186.6 1282.3,183.6 1285.4,184.5" fill="none" stroke="#5a5a5a" stroke-width="1.100"/><circle cx="1287.500" cy="192.500" r="6.600" fill="none" stroke="#5a5a5a" stroke-width="0.900"/><path d="M1311 199.500C1306.500 199.500 1305.500 194.500 1309 193C1307.500 189 1312.500 186 1315.500 188.500C1317.500 185 1323.500 185.500 1324 189C1328.500 188 1330.500 193 1327.500 195C1329.500 198.500 1325 201.500 1322 199.500C1319.500 202 1313.500 202 1311 199.500Z" fill="none" stroke="#5a5a5a" stroke-width="1.2" stroke-linejoin="round"/><circle cx="1346.800" cy="193" r="5.300" fill="none" stroke="#5a5a5a" stroke-width="1.2"/><path d="M1354.2 193.0L1356.7 193.0" stroke="#5a5a5a" stroke-width="1.600"/><path d="M1352.0 198.2L1353.8 200.0" stroke="#5a5a5a" stroke-width="1.600"/><path d="M1346.8 200.4L1346.8 202.9" stroke="#5a5a5a" stroke-width="1.600"/><path d="M1341.6 198.2L1339.8 200.0" stroke="#5a5a5a" stroke-width="1.600"/><path d="M1339.4 193.0L1336.9 193.0" stroke="#5a5a5a" stroke-width="1.600"/><path d="M1341.6 187.8L1339.8 186.0" stroke="#5a5a5a" stroke-width="1.600"/><path d="M1346.8 185.6L1346.8 183.1" stroke="#5a5a5a" stroke-width="1.600"/><path d="M1352.0 187.8L1353.8 186.0" stroke="#5a5a5a" stroke-width="1.600"/><rect x="1365.500" y="185" width="21.500" height="15.500" fill="none" stroke="#5a5a5a" stroke-width="1.2"/><path d="M1376.500 189.500H1384M1376.500 192.500H1384M1368.500 196.500H1384" stroke="#777" stroke-width="1"/><path d="M1396.300 183.800L1416.300 202.500" fill="none" stroke="#5a5a5a" stroke-width="1.2" stroke-linejoin="round"/><path d="M1248.800 211.300L1268.500 228.600M1268.900 223.500V229H1263.300" fill="none" stroke="#5a5a5a" stroke-width="1.2" stroke-linejoin="round"/><rect x="1277.300" y="213" width="22.700" height="15.700" fill="none" stroke="#5a5a5a" stroke-width="1.2"/><ellipse cx="1317" cy="220.800" rx="10.700" ry="7.900" fill="none" stroke="#5a5a5a" stroke-width="1.2"/><rect x="1335.800" y="213" width="22.700" height="15.700" rx="4" fill="none" stroke="#5a5a5a" stroke-width="1.2"/><path d="M1377.500 211.500L1387 229.300H1368Z" fill="none" stroke="#5a5a5a" stroke-width="1.2" stroke-linejoin="round"/><path d="M1395 213H1406.300V228.800H1417.500" fill="none" stroke="#5a5a5a" stroke-width="1.2" stroke-linejoin="round"/><path d="M1248.800 240H1259.500V255.500H1269M1266 252.300L1269.500 255.500L1266 258.700" fill="none" stroke="#5a5a5a" stroke-width="1.2" stroke-linejoin="round"/><path d="M1277.500 244H1288V239.200L1298 248L1288 256.800V252H1277.500Z" fill="none" stroke="#5a5a5a" stroke-width="1.2" stroke-linejoin="round"/><path d="M1312.500 238.800H1322V248.500H1327.300L1317.300 257.500L1307.300 248.500H1312.500Z" fill="none" stroke="#5a5a5a" stroke-width="1.2" stroke-linejoin="round"/><path d="M1337.500 243.500C1337.500 241.500 1339 240.500 1341 240.500H1351.500C1350 244 1352 247 1357.500 246.500V253C1357.500 255 1356 256 1354 256H1341C1339 256 1337.500 255 1337.500 253Z" fill="none" stroke="#5a5a5a" stroke-width="1.2" stroke-linejoin="round"/><path d="M1376 238.500C1371 239 1370 243 1373.500 245C1378 247 1381 244 1378.500 241.500C1375.500 240 1373 246 1376.500 249C1381.500 251 1382.500 254.500 1379.500 256.500C1376.500 257.500 1375.500 253.500 1378.500 252" fill="none" stroke="#5a5a5a" stroke-width="1.2" stroke-linejoin="round"/><path d="M1396.300 241.500C1408 240.500 1416 247 1417.300 256.500" fill="none" stroke="#5a5a5a" stroke-width="1.2" stroke-linejoin="round"/><path d="M1429.800 191.500H1436.200L1433 195.200Z" fill="#c4c4c4"/><path d="M1429.800 219H1436.200L1433 222.700Z" fill="#666"/><path d="M1429.500 244H1436.500" stroke="#666" stroke-width="1.300"/><path d="M1429.800 247H1436.200L1433 250.700Z" fill="#666"/><rect x="1480" y="186.300" width="15" height="15" fill="#e9c477"/><rect x="1467.500" y="198.800" width="15" height="12.500" fill="#e9c477"/><rect x="1462.300" y="181.500" width="16.500" height="15" fill="#fff" stroke="#8a8a8a" stroke-width="1.200"/><rect x="1484.500" y="202" width="16" height="15" fill="#fff" stroke="#8a8a8a" stroke-width="1.200"/><rect x="1529.500" y="183.500" width="38" height="35" rx="8" fill="#fdfdfd" stroke="#9a9a9a" stroke-width="1.300"/><path d="M1570.500 193L1573 196L1560.500 208.500L1556.500 205.500Z" fill="#6c6c6c"/><path d="M1556.500 205.500L1560.500 208.500C1558 214 1551 219 1540 219.500C1546 216 1550 209.500 1556.500 205.500Z" fill="#3f7fc1"/><path d="M1553 209C1551.500 212 1548.500 215 1545.500 216.500" stroke="#b9d4ee" stroke-width="1.200" fill="none"/><rect x="1583" y="195" width="24.500" height="5.500" fill="#e6e61a"/><path d="M1591 183L1597.500 178.500L1605 188L1596 194L1589.500 186.500Z" fill="#fff" stroke="#555" stroke-width="1.300" stroke-linejoin="round"/><path d="M1593.500 184V179.500C1593.500 177.500 1596.500 177.500 1596.500 179.500V182" fill="none" stroke="#555" stroke-width="1.200"/><path d="M1605.200 188.500C1607.500 191 1607.500 193.500 1605.200 193.500C1603.300 193.500 1603.300 191 1605.200 188.500Z" fill="#3b7fc4"/><path d="M1596 211.500H1586.500V226H1601.500V222" fill="none" stroke="#666" stroke-width="1.300"/><path d="M1604 210.500L1607 213.500L1596.500 224L1592.500 225L1593.500 221Z" fill="#3f6fae" stroke="#444" stroke-width=".8"/><rect x="1585.500" y="228" width="21.500" height="3" fill="#f4f4f4"/><path d="M1590 246H1604C1606.500 246 1607 248 1606.300 250L1604.500 256.500C1604 258.500 1602.500 259.500 1600.500 259.500H1588C1585.500 259.500 1584.500 258 1585.200 256L1587 249C1587.500 247 1588.500 246 1590 246Z" fill="#a9a9a9"/><path d="M1590.500 246H1603.500C1605.500 246 1606.300 247.500 1605.800 249L1604.500 253C1604 254.500 1603 255.500 1601 255.500H1588.500C1586.500 255.500 1586 254 1586.500 252.500L1587.500 249C1588 247 1589 246 1590.500 246Z" fill="#f3f3f3" stroke="#7b7b7b" stroke-width="1.100"/><circle cx="1772" cy="186.700" r="5.300" fill="#fff" stroke="#6c9bd2" stroke-width="1.900"/><path d="M1767.800 191L1761 197" stroke="#2c5fa3" stroke-width="2.600" stroke-linecap="round"/><path d="M1760 223V226.500H1764M1762.300 224.800L1764.200 226.500L1762.300 228.200" stroke="#3b7fc4" stroke-width="1" fill="none"/><path d="M1764.500 242.500V258L1768.200 254.500L1771 261L1773.500 260L1770.800 253.600H1776Z" fill="#fff" stroke="#555" stroke-width="1.200" stroke-linejoin="round"/></svg>
<svg style="left:0px;top:0px;" width="2048" height="1152" viewBox="0 0 2048 1152"><path d="M154 1074.500H160.500C161.800 1074.500 162.500 1075.300 162.500 1076.500V1087.500C162.500 1086.500 161.800 1086 160.500 1086H154ZM162.500 1076.500C162.500 1075.300 163.300 1074.500 164.500 1074.500H171V1078" fill="none" stroke="#666" stroke-width="1.200"/><path d="M164.500 1083L167.500 1086.500L173.500 1078.500" fill="none" stroke="#666" stroke-width="1.400"/><path d="M1288.500 1077.500H1295.500L1292 1073.500Z" fill="#666"/><path d="M1285 1080.500H1299.500M1285 1084H1299.500M1285 1087.500H1295" stroke="#666" stroke-width="1.300"/><path d="M1382.500 1075H1398.500V1085H1390L1386.500 1089V1085H1382.500Z" fill="#5f5f5f"/><rect x="1531.500" y="1074" width="18" height="14.500" fill="none" stroke="#666" stroke-width="1.300"/><path d="M1536 1074V1088.500M1536 1084.500H1549.500" stroke="#666" stroke-width="1.200"/><rect x="1539" y="1076.800" width="7.500" height="4.800" fill="none" stroke="#666" stroke-width="1.100"/><rect x="1587" y="1073.5" width="7.500" height="6" fill="none" stroke="#666" stroke-width="1.200"/><rect x="1587" y="1083" width="7.500" height="6" fill="none" stroke="#666" stroke-width="1.200"/><rect x="1598.5" y="1073.5" width="7.500" height="6" fill="none" stroke="#666" stroke-width="1.200"/><rect x="1598.5" y="1083" width="7.500" height="6" fill="none" stroke="#666" stroke-width="1.200"/><path d="M1651.700 1076C1649 1074 1645.500 1073.800 1642.500 1074.500V1087C1645.500 1086.300 1649 1086.500 1651.700 1088.500C1654.400 1086.500 1658 1086.300 1661 1087V1074.500C1658 1073.800 1654.400 1074 1651.700 1076ZM1651.700 1076V1088.500" fill="none" stroke="#666" stroke-width="1.200"/><path d="M1644.500 1077.500H1649.500M1644.500 1080.500H1649.500M1644.500 1083.500H1649.500M1654 1077.500H1659M1654 1080.500H1659M1654 1083.500H1659" stroke="#777" stroke-width=".9"/><path d="M1698.500 1075H1717M1700.500 1075V1082.500H1715V1075M1707.800 1082.500V1088M1704 1089H1711.500" fill="none" stroke="#666" stroke-width="1.400"/><rect x="1996" y="1074.500" width="17.500" height="15" fill="none" stroke="#666" stroke-width="1.200"/><path d="M2004.800 1077V1087M1999 1082H2010.500M2003 1078.800L2004.800 1076.800L2006.600 1078.800M2003 1085.200L2004.800 1087.200L2006.600 1085.200M2000.800 1080.200L1998.800 1082L2000.800 1083.800M2008.700 1080.200L2010.700 1082L2008.700 1083.800" stroke="#666" stroke-width="1" fill="none"/><path d="M44.500 1116.800L54 1115.500V1124H44.500ZM55.500 1115.300L67.500 1113.600V1124H55.500ZM44.500 1125.500H54V1134L44.500 1132.700ZM55.500 1125.500H67.500V1135.800L55.500 1134.200Z" fill="#fff"/><rect x="623" y="1115.500" width="16" height="18" fill="none" stroke="#f2f2f2" stroke-width="1.700"/><path d="M619.500 1118H617.500V1131H619.500M642.500 1118H645V1131H642.500" fill="none" stroke="#f2f2f2" stroke-width="1.500"/><path d="M704.5 1124.5L690.47 1116.40A16.2 16.2 0 0 1 718.53 1116.40Z" fill="#de4b3c"/><path d="M704.5 1124.5L718.53 1116.40A16.2 16.2 0 0 1 704.50 1140.70Z" fill="#f5c633"/><path d="M704.5 1124.5L704.50 1140.70A16.2 16.2 0 0 1 690.47 1116.40Z" fill="#3da457"/><circle cx="704.5" cy="1124.5" r="7.400" fill="#f4f4f4"/><circle cx="704.5" cy="1124.5" r="5.800" fill="#4a8af4"/><path d="M761 1114.500H773L775.500 1117.500H792.500V1135H761Z" fill="#f3d262"/><path d="M761 1120H792.500V1135H761Z" fill="#f7e08b"/><path d="M767.500 1128.500H786V1136.500H780.500V1133H773V1136.500H767.500Z" fill="#3f8fd6"/><rect x="763" y="1116" width="8" height="2" fill="#fbecad"/><path d="M836 1123C837.500 1114.500 843.500 1110.500 850 1110.500C858.500 1110.500 863.500 1116.500 863.500 1125V1127.500H845.500C845.800 1132 849.500 1134 853.500 1134C857 1134 860 1133 862.500 1131.500V1136.500C860 1138 856.500 1139 852.500 1139C843.500 1139 838 1133.500 838 1126C838 1121.500 840.500 1117.500 844.500 1116C842 1118 840.500 1120 840 1123ZM845.700 1122.500H856C856 1118.500 853.800 1116.300 850.800 1116.300C848 1116.300 846.200 1118.500 845.700 1122.500Z" fill="#1f7fe0"/><circle cx="920.500" cy="1123.500" r="13.500" fill="#12a5e6"/><circle cx="912" cy="1116" r="7" fill="#12a5e6"/><circle cx="929" cy="1131.500" r="7" fill="#12a5e6"/><ellipse cx="989.500" cy="1126.500" rx="14" ry="10.500" fill="#dfe3e6" transform="rotate(-15 989.500 1126.500)"/><circle cx="984" cy="1121.500" r="2.300" fill="#e4572e"/><circle cx="991" cy="1119.500" r="2.300" fill="#4caf50"/><circle cx="981.500" cy="1128" r="2.300" fill="#3f8fd6"/><circle cx="986.500" cy="1133" r="2.300" fill="#f2c230"/><circle cx="994.500" cy="1130" r="3" fill="#04050a"/><path d="M1005.500 1108.500L1008.500 1110.500L998.500 1128L995 1130.500L995.500 1126Z" fill="#c9a05a"/><path d="M1003 1109L1009.500 1113L1008 1115.500L1001.500 1111.500Z" fill="#e0c07a"/><rect x="1062" y="1112" width="18" height="24" fill="#f5f0ee"/><path d="M1066 1117H1077.500M1066 1121.500H1077.500M1066 1126H1077.500M1066 1130.500H1077.500" stroke="#d35230" stroke-width="2"/><path d="M1047.500 1111.500L1066 1108.500V1139L1047.500 1136Z" fill="#d24726"/><path d="M1699 1129L1708 1120.500L1717 1129" fill="none" stroke="#f2f2f2" stroke-width="1.800"/><rect x="1731.500" y="1113.500" width="23.500" height="21.500" fill="#2334c8"/><circle cx="1737" cy="1118" r="3.500" fill="#f4e51e"/><path d="M1733 1133C1736 1127 1741 1130 1744 1124C1746 1120 1750 1117 1753 1116L1752 1124L1754.500 1131L1748 1130L1741 1135H1733Z" fill="#e8233f"/><path d="M1743.500 1119L1749 1126M1750.500 1119.500L1745 1128" stroke="#1b2aa8" stroke-width="1.300"/><rect x="1768.500" y="1120.500" width="19" height="10" fill="none" stroke="#f2f2f2" stroke-width="1.600"/><rect x="1788" y="1123.500" width="2.200" height="4.500" fill="#f2f2f2"/><rect x="1771" y="1123" width="10" height="5.200" fill="#f2f2f2"/><path d="M1807 1133C1807 1125 1814 1118.500 1823 1118.500" fill="none" stroke="#f2f2f2" stroke-width="1.700"/><path d="M1811.500 1133C1811.500 1127.500 1816.500 1123 1823 1123" fill="none" stroke="#f2f2f2" stroke-width="1.700"/><path d="M1816 1133C1816 1130 1819 1127.500 1823 1127.500" fill="none" stroke="#f2f2f2" stroke-width="1.700"/><rect x="1819.500" y="1130" width="4" height="3.500" fill="#f2f2f2"/><path d="M1837 1121.500H1841L1846.500 1116.500V1132.500L1841 1127.500H1837Z" fill="none" stroke="#f2f2f2" stroke-width="1.500" stroke-linejoin="round"/><path d="M1849.500 1120.500C1851.500 1123 1851.500 1126 1849.500 1128.500M1852.800 1118C1856 1122 1856 1127.500 1852.800 1131.500" fill="none" stroke="#f2f2f2" stroke-width="1.400"/><path d="M1856.500 1116C1860 1121 1860 1128.500 1856.500 1133.500" fill="none" stroke="#8a8a8a" stroke-width="1.200"/><path d="M1873 1115H1895V1130.500H1888L1884 1135L1880 1130.500H1873Z" fill="#f5f5f5"/><path d="M1876.500 1119.500H1891.500M1876.500 1123H1891.500M1876.500 1126.500H1887" stroke="#04050a" stroke-width="1.300"/></svg>
<span class="t" style="left:914.5px;top:1114px;font-size:21px;line-height:21px;color:#fff;transform:scaleX(0.8567);font-weight:bold;">S</span>
<span class="t" style="left:1051px;top:1116px;font-size:18px;line-height:18px;color:#fff;transform:scaleX(0.9162);font-weight:bold;">P</span>
</div></body></html>
